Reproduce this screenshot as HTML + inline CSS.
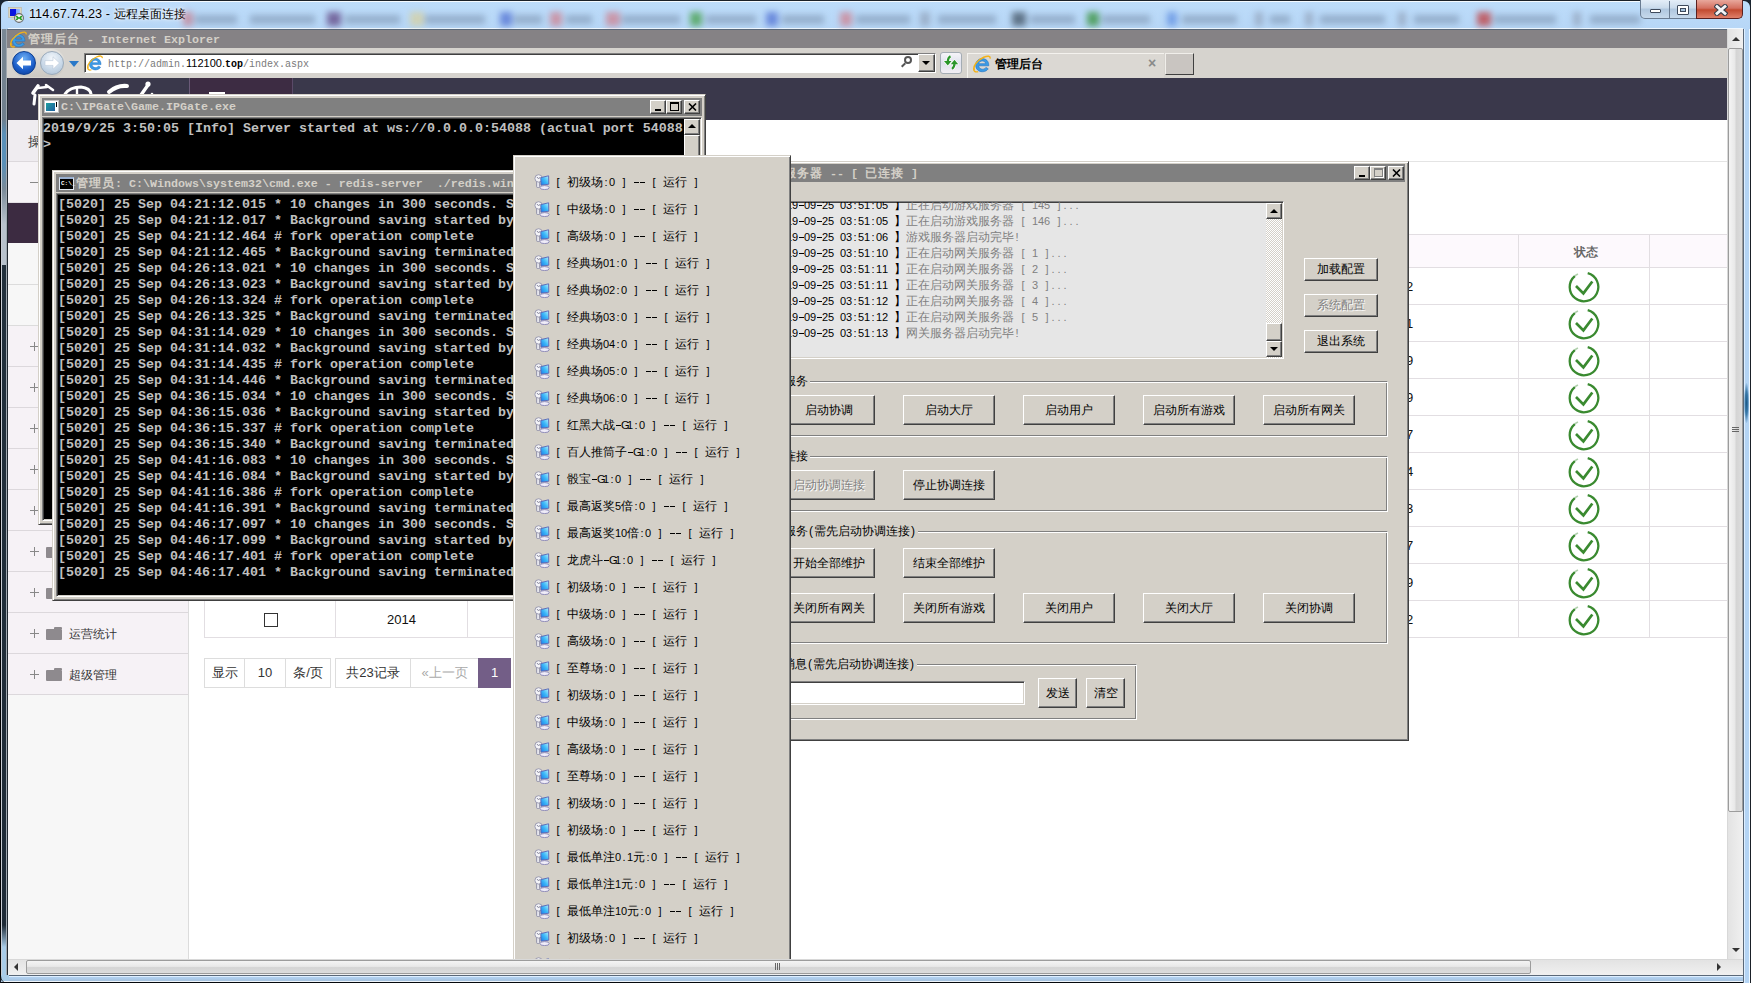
<!DOCTYPE html><html><head><meta charset="utf-8"><style>
.ss2{font-family:"Liberation Sans",sans-serif;font-size:11px;white-space:pre;line-height:16px}
.ss2 b.c{font-size:12px;font-weight:normal}
i.h{display:inline-block;width:6px;text-align:center;font-style:normal;position:relative}
i.d:after{content:"";position:absolute;left:0.5px;top:8px;width:5px;height:1px;background:currentColor}

*{box-sizing:border-box;margin:0;padding:0}
html,body{width:1751px;height:983px;overflow:hidden;background:#1a2633}
body{position:relative;font-family:"Liberation Sans",sans-serif;font-size:12px;color:#000}
.a{position:absolute}
b.c{font-weight:normal}
.ss{font-family:"Liberation Mono",monospace;font-size:10px;white-space:pre;line-height:16px}
.ss b.c{font-size:12px;font-weight:normal}
.con{font-family:"Liberation Mono",monospace;font-weight:bold;font-size:13.34px;color:#c0c0c0;white-space:pre;line-height:16px}
.win{position:absolute;background:#d4d0c8;border:1px solid;border-color:#d4d0c8 #404040 #404040 #d4d0c8;box-shadow:inset 1px 1px 0 #fff,inset -1px -1px 0 #808080}
.cap{position:absolute;background:#808080;color:#d4d0c8}
.tb{position:absolute;width:16px;height:14px;background:#d4d0c8;border:1px solid;border-color:#fff #404040 #404040 #fff;box-shadow:inset -1px -1px 0 #808080}
.btn{position:absolute;background:#d4d0c8;border:1px solid;border-color:#fff #404040 #404040 #fff;box-shadow:inset -1px -1px 0 #808080;text-align:center;font-size:12px;color:#000}
.grp{position:absolute;border:1px solid;border-color:#808080 #fff #fff #808080;box-shadow:inset 1px 1px 0 #fff,inset -1px -1px 0 #808080}
.glbl{position:absolute;background:#d4d0c8;padding:0 2px 0 0;font-size:12px;line-height:14px}
</style></head><body><div class="a" style="left:0;top:0;width:1751px;height:983px;border-radius:7px 7px 0 0;background:linear-gradient(#bddcfa,#b6d6f6 30px,#aecbe8);border:1px solid #1a2028;border-bottom:1px solid #05080c"></div><div class="a" style="left:0;top:29px;width:8px;height:946px;background:linear-gradient(90deg,#000 0 1px,#c8ccd4 1px 2px,transparent 2px 6px,#a0a8b0 6px 7px,#202830 7px 8px),linear-gradient(#7a8894 0,#6e7e8c 90px,#5a90b8 105px,#5a90b8 135px,#7a8a98 160px,#b8c2cc 195px,#b8c2cc 236px,#22303c 236px,#1e2a36 896px,#a8cce8 918px)"></div><div class="a" style="left:8px;top:975px;width:1735px;height:8px;background:linear-gradient(#5a6878 0 1px,#ddeeff 1px 2px,#b2d2f2 2px,#a6c2de 6px,#eef4fa 6px 7px,#05080c 7px 8px)"></div><div class="a" style="left:0;top:975px;width:9px;height:8px;background:linear-gradient(#a8cce8 0 6px,#eef4fa 6px 7px,#05080c 7px 8px);border-left:1px solid #000;border-bottom-left-radius:7px"></div><div class="a" style="left:1743px;top:29px;width:8px;height:954px;background:linear-gradient(90deg,#5a6878 0 1px,#ddeeff 1px 2px,#b4d4f4 2px 6px,#eef8ff 6px 7px,#1a2028 7px 8px)"></div><div class="a" style="left:1744px;top:383px;width:5px;height:40px;background:radial-gradient(ellipse at center,#1e5a88 0,#3a7aaa 40%,rgba(180,212,244,0) 75%)"></div><svg class="a" style="left:4px;top:2px" width="24" height="24" viewBox="0 0 24 24"><defs><linearGradient id="scr" x1="0" y1="0" x2="1" y2="0"><stop offset="0" stop-color="#0a18d8"/><stop offset=".55" stop-color="#0a10e8"/><stop offset=".6" stop-color="#7aa0ff"/><stop offset="1" stop-color="#9cc0ff"/></linearGradient></defs><rect x="4.5" y="5.5" width="13" height="10" fill="#dcd6c0" stroke="#bcb6a0" stroke-width=".6"/><rect x="6" y="7" width="10" height="7" fill="url(#scr)"/><rect x="7" y="16.5" width="4" height="1.5" fill="#d8d4c4"/><circle cx="15" cy="16" r="4.4" fill="#f4f4f4" stroke="#6a6a6a" stroke-width="1.1"/><path d="M12.2 14.2 L14.2 16 L12.2 17.8 M17.8 14.2 L15.8 16 L17.8 17.8" fill="none" stroke="#1a9a1a" stroke-width="1.6"/></svg><div class="a" style="left:29px;top:6px;font-size:12.7px;line-height:17px;color:#000;white-space:nowrap;text-shadow:0 0 6px #fff,0 0 3px #fff">114.67.74.23 - <span style="font-size:12px;margin-left:1px">远程桌面连接</span></div><div class="a" style="left:8px;top:1px;width:1632px;height:1px;background:#f4faff"></div><div class="a" style="left:8px;top:28px;width:1735px;height:1px;background:#f0f8ff"></div><div class="a" style="left:0;top:0;width:1751px;height:28px;overflow:hidden;filter:blur(3px)"><div class="a" style="left:183px;top:12px;width:10px;height:14px;background:#c77a8a;opacity:.7"></div><div class="a" style="left:195px;top:15px;width:42px;height:9px;background:#6a7f98;opacity:.45"></div><div class="a" style="left:250px;top:15px;width:65px;height:9px;background:#6a7f98;opacity:.45"></div><div class="a" style="left:327px;top:12px;width:14px;height:14px;background:#5a3a7a;opacity:.7"></div><div class="a" style="left:345px;top:15px;width:55px;height:9px;background:#6a7f98;opacity:.45"></div><div class="a" style="left:410px;top:12px;width:14px;height:14px;background:#d8d09a;opacity:.7"></div><div class="a" style="left:425px;top:15px;width:60px;height:9px;background:#6a7f98;opacity:.45"></div><div class="a" style="left:500px;top:12px;width:12px;height:14px;background:#4a6ad0;opacity:.7"></div><div class="a" style="left:514px;top:15px;width:28px;height:9px;background:#6a7f98;opacity:.45"></div><div class="a" style="left:550px;top:12px;width:12px;height:14px;background:#d07a88;opacity:.7"></div><div class="a" style="left:566px;top:15px;width:26px;height:9px;background:#6a7f98;opacity:.45"></div><div class="a" style="left:606px;top:12px;width:14px;height:14px;background:#d07a88;opacity:.7"></div><div class="a" style="left:622px;top:15px;width:58px;height:9px;background:#6a7f98;opacity:.45"></div><div class="a" style="left:690px;top:12px;width:12px;height:14px;background:#3a9a3a;opacity:.7"></div><div class="a" style="left:706px;top:15px;width:50px;height:9px;background:#6a7f98;opacity:.45"></div><div class="a" style="left:766px;top:12px;width:12px;height:14px;background:#4a6ad0;opacity:.7"></div><div class="a" style="left:782px;top:15px;width:42px;height:9px;background:#6a7f98;opacity:.45"></div><div class="a" style="left:840px;top:12px;width:12px;height:14px;background:#d07a88;opacity:.7"></div><div class="a" style="left:856px;top:15px;width:54px;height:9px;background:#6a7f98;opacity:.45"></div><div class="a" style="left:920px;top:12px;width:10px;height:14px;background:#90a0b8;opacity:.7"></div><div class="a" style="left:938px;top:15px;width:58px;height:9px;background:#6a7f98;opacity:.45"></div><div class="a" style="left:1012px;top:12px;width:14px;height:14px;background:#3a4a5a;opacity:.7"></div><div class="a" style="left:1030px;top:15px;width:45px;height:9px;background:#6a7f98;opacity:.45"></div><div class="a" style="left:1087px;top:12px;width:12px;height:14px;background:#2a8a2a;opacity:.7"></div><div class="a" style="left:1102px;top:15px;width:48px;height:9px;background:#6a7f98;opacity:.45"></div><div class="a" style="left:1167px;top:12px;width:10px;height:14px;background:#5a8ae0;opacity:.7"></div><div class="a" style="left:1182px;top:15px;width:55px;height:9px;background:#6a7f98;opacity:.45"></div><div class="a" style="left:1255px;top:12px;width:8px;height:14px;background:#90a0b8;opacity:.7"></div><div class="a" style="left:1270px;top:15px;width:20px;height:9px;background:#6a7f98;opacity:.45"></div><div class="a" style="left:1305px;top:12px;width:8px;height:14px;background:#90a0b8;opacity:.7"></div><div class="a" style="left:1320px;top:15px;width:65px;height:9px;background:#6a7f98;opacity:.45"></div><div class="a" style="left:1398px;top:12px;width:8px;height:14px;background:#90a0b8;opacity:.7"></div><div class="a" style="left:1414px;top:15px;width:45px;height:9px;background:#6a7f98;opacity:.45"></div><div class="a" style="left:1477px;top:12px;width:14px;height:14px;background:#c03030;opacity:.7"></div><div class="a" style="left:1494px;top:15px;width:62px;height:9px;background:#6a7f98;opacity:.45"></div><div class="a" style="left:1573px;top:12px;width:8px;height:14px;background:#90a0b8;opacity:.7"></div><div class="a" style="left:1590px;top:15px;width:50px;height:9px;background:#6a7f98;opacity:.45"></div></div><div class="a" style="left:1640px;top:0;width:57px;height:19px;border:1px solid #6a7c92;border-top:none;border-radius:0 0 0 5px;background:linear-gradient(#e4eef8,#c9daeb 45%,#afc6de 50%,#c6d9ec)"></div><div class="a" style="left:1669px;top:1px;width:1px;height:17px;background:#6a7c92"></div><div class="a" style="left:1650px;top:9px;width:11px;height:4px;background:#fff;border:1px solid #3e4a5c;border-radius:1px"></div><div class="a" style="left:1677px;top:5px;width:12px;height:10px;background:#fff;border:1px solid #3e4a5c;border-radius:1px"><div class="a" style="left:2px;top:2px;width:6px;height:4px;background:#a9c4de;border:1px solid #3e4a5c"></div></div><div class="a" style="left:1696px;top:0;width:47px;height:19px;border:1px solid #5a2020;border-top:none;border-radius:0 0 5px 0;background:linear-gradient(#e8a89c,#d47060 45%,#c24a30 55%,#e0806a)"></div><svg class="a" style="left:1714px;top:4px" width="14" height="12" viewBox="0 0 14 12"><path d="M3 2.5 L11 9.5 M11 2.5 L3 9.5" stroke="#3a3f4a" stroke-width="5" stroke-linecap="square"/><path d="M3 2.5 L11 9.5 M11 2.5 L3 9.5" stroke="#f4f4f6" stroke-width="2.8" stroke-linecap="square"/></svg><div class="a" style="left:7px;top:29px;width:1720px;height:19px;background:#858285;border-top:1px solid #5a6878"></div><svg class="a" style="left:10px;top:31px" width="17" height="17" viewBox="0 0 16 16"><path d="M14 9.6 H5 C5.3 11.5 6.6 12.6 8.4 12.6 C9.7 12.6 10.8 12 11.5 11 L13.6 12.3 C12.4 14 10.6 14.9 8.3 14.9 C4.8 14.9 2.4 12.5 2.4 9.1 C2.4 5.7 4.9 3.2 8.2 3.2 C11.6 3.2 14 5.5 14 9 Z M5.1 7.7 H11.3 C11 6.2 9.8 5.3 8.2 5.3 C6.6 5.3 5.4 6.2 5.1 7.7 Z" fill="#3b9be6" stroke="#1f6fc0" stroke-width=".5"/><path d="M1.2 13.5 C-0.5 10 4 4.5 9.5 2 C13 0.5 15.6 0.6 15.2 3.2" fill="none" stroke="#f2b21a" stroke-width="1.3"/><path d="M0.8 11.5 C0.2 14.5 2 15.6 4.5 14.8" fill="none" stroke="#f2b21a" stroke-width="1.2"/></svg><div class="a" style="left:28px;top:31px;font-size:12px;line-height:16px;color:#d4d0c8;white-space:pre"><b class="c" style="font-weight:bold;letter-spacing:1px">管理后台</b><span style="font-family:'Liberation Mono',monospace;font-weight:bold;font-size:11.67px"> - Internet Explorer</span></div><div class="a" style="left:7px;top:48px;width:1720px;height:30px;background:#d6d3ce"></div><div class="a" style="left:11px;top:49px;width:54px;height:28px;border-radius:14px;background:linear-gradient(#e8e6e2,#c9c6c0);opacity:.8"></div><div class="a" style="left:12px;top:51px;width:24px;height:24px;border-radius:50%;background:radial-gradient(circle at 50% 30%,#6fb0f5,#1a5cc8 60%,#0c3a90);border:1px solid #0f3f8f"></div><svg class="a" style="left:12px;top:51px" width="24" height="24" viewBox="0 0 24 24"><path d="M4.5 12 L11 5.8 V9.6 H19 V14.4 H11 V18.2 Z" fill="#fff"/></svg><div class="a" style="left:40px;top:51px;width:24px;height:24px;border-radius:50%;background:radial-gradient(circle at 50% 30%,#f4f8fc,#c6d6e6 60%,#a9bdd2);border:1px solid #9aaabb"></div><svg class="a" style="left:40px;top:51px" width="24" height="24" viewBox="0 0 24 24"><path d="M19.5 12 L13 5.8 V9.6 H5 V14.4 H13 V18.2 Z" fill="#fff" stroke="#b8c8d8" stroke-width=".6"/></svg><div class="a" style="left:69px;top:61px;width:0;height:0;border-left:5px solid transparent;border-right:5px solid transparent;border-top:6px solid #2a78c8"></div><div class="a" style="left:84px;top:53px;width:852px;height:20px;background:#fff;border:1px solid;border-color:#808080 #fff #fff #808080;box-shadow:inset 1px 1px 0 #404040"></div><svg class="a" style="left:87px;top:55px" width="16" height="16" viewBox="0 0 16 16"><path d="M14 9.6 H5 C5.3 11.5 6.6 12.6 8.4 12.6 C9.7 12.6 10.8 12 11.5 11 L13.6 12.3 C12.4 14 10.6 14.9 8.3 14.9 C4.8 14.9 2.4 12.5 2.4 9.1 C2.4 5.7 4.9 3.2 8.2 3.2 C11.6 3.2 14 5.5 14 9 Z M5.1 7.7 H11.3 C11 6.2 9.8 5.3 8.2 5.3 C6.6 5.3 5.4 6.2 5.1 7.7 Z" fill="#3b9be6" stroke="#1f6fc0" stroke-width=".5"/><path d="M1.2 13.5 C-0.5 10 4 4.5 9.5 2 C13 0.5 15.6 0.6 15.2 3.2" fill="none" stroke="#f2b21a" stroke-width="1.3"/><path d="M0.8 11.5 C0.2 14.5 2 15.6 4.5 14.8" fill="none" stroke="#f2b21a" stroke-width="1.2"/></svg><div class="a" style="left:108px;top:55px;font-family:'Liberation Mono',monospace;font-size:10px;line-height:16px;white-space:pre;color:#7a7a7a">http://admin.<span style="color:#000;font-family:'Liberation Sans',sans-serif;font-size:11px">112100.</span><span style="color:#000;font-weight:bold">top</span>/index.aspx</div><div class="a" style="left:904px;top:56px;width:8px;height:8px;border:2px solid #555;border-radius:50%"></div><div class="a" style="left:901px;top:64px;width:5px;height:2px;background:#555;transform:rotate(-45deg)"></div><div class="btn" style="left:918px;top:54px;width:17px;height:18px"></div><div class="a" style="left:922px;top:61px;border-left:4px solid transparent;border-right:4px solid transparent;border-top:4px solid #000"></div><div class="a" style="left:940px;top:52px;width:22px;height:22px;border:1px solid #a4acb4;border-radius:3px;background:linear-gradient(#f6f4f8,#dfe2ee 50%,#f2eef4)"></div><svg class="a" style="left:942px;top:55px" width="18" height="17" viewBox="0 0 18 17"><g stroke="#fff" stroke-width="1.2" stroke-linejoin="round"><path d="M8.5 1.2 Q6 2.5 5.8 6.5" stroke-width="3.6" fill="none"/><path d="M2 6 L9.5 6 L5.8 10.5 Z" fill="#fff"/><path d="M12.5 8.5 Q12.5 12 10 13.8" stroke-width="3.6" fill="none"/><path d="M8.8 9.2 L16.2 9.2 L12.5 4.8 Z" fill="#fff"/></g><path d="M8.5 1.2 Q6 2.5 5.8 6.5" stroke="#2a962a" stroke-width="2.2" fill="none"/><path d="M2 6 L9.5 6 L5.8 10.5 Z" fill="#2a962a"/><path d="M12.5 8.5 Q12.5 12 10 13.8" stroke="#2a962a" stroke-width="2.2" fill="none"/><path d="M8.8 9.2 L16.2 9.2 L12.5 4.8 Z" fill="#2a962a"/></svg><div class="a" style="left:967px;top:53px;width:197px;height:25px;background:#dbd8d3;border-left:1px solid #f4f2ee;border-top:1px solid #f4f2ee"></div><svg class="a" style="left:973px;top:55px" width="18" height="18" viewBox="0 0 16 16"><path d="M14 9.6 H5 C5.3 11.5 6.6 12.6 8.4 12.6 C9.7 12.6 10.8 12 11.5 11 L13.6 12.3 C12.4 14 10.6 14.9 8.3 14.9 C4.8 14.9 2.4 12.5 2.4 9.1 C2.4 5.7 4.9 3.2 8.2 3.2 C11.6 3.2 14 5.5 14 9 Z M5.1 7.7 H11.3 C11 6.2 9.8 5.3 8.2 5.3 C6.6 5.3 5.4 6.2 5.1 7.7 Z" fill="#3b9be6" stroke="#1f6fc0" stroke-width=".5"/><path d="M1.2 13.5 C-0.5 10 4 4.5 9.5 2 C13 0.5 15.6 0.6 15.2 3.2" fill="none" stroke="#f2b21a" stroke-width="1.3"/><path d="M0.8 11.5 C0.2 14.5 2 15.6 4.5 14.8" fill="none" stroke="#f2b21a" stroke-width="1.2"/></svg><div class="a" style="left:995px;top:56px;font-size:12px;font-weight:bold;line-height:16px;color:#000;letter-spacing:0">管理后台</div><div class="a" style="left:1148px;top:54px;font:bold 14px/18px 'Liberation Sans',sans-serif;color:#8a8a8a">&#xd7;</div><div class="a" style="left:1165px;top:53px;width:29px;height:22px;background:#c9c5c1;border:1px solid;border-color:#f0eeea #404040 #404040 #f0eeea"></div><div class="a" style="left:8px;top:78px;width:1719px;height:881px;background:#fff;overflow:hidden"><div class="a" style="left:0;top:0;width:1719px;height:42px;background:#3a384b"></div><div class="a" style="left:181px;top:0;width:104px;height:42px;background:#3d2c43;border-left:1px solid #6a5a78;border-right:1px solid #5a4a68"></div><div class="a" style="left:201px;top:14px;width:16px;height:3px;background:#fff"></div><svg class="a" style="left:7px;top:0" width="170" height="30" viewBox="0 0 170 30"><g fill="none" stroke="#fff" stroke-linecap="round" stroke-linejoin="round"><path d="M18 15 L23 8" stroke-width="3.6"/><path d="M23 10 L32 9" stroke-width="2.6"/><path d="M31 7 L38 12" stroke-width="2.6"/><path d="M20 17 L19 26" stroke-width="3"/><path d="M50 16 Q55 9 66 9 Q75 10 76 16" stroke-width="3"/><path d="M62 10 L62 16" stroke-width="2.4"/><path d="M94 14 Q102 7 112 8" stroke-width="4"/><path d="M126 17 L133 7" stroke-width="3.4"/></g><circle cx="133" cy="6" r="2.6" fill="#fff"/><circle cx="137" cy="16" r="1.3" fill="#fff"/></svg><div class="a" style="left:20px;top:26px;width:10px;height:16px;overflow:hidden"></div><div class="a" style="left:0;top:42px;width:181px;height:839px;background:#f7f7f7;border-right:1px solid #dcdcdc"></div><div class="a" style="left:0;top:42px;width:180px;height:42px;background:#efecf0;border-bottom:1px solid #dcd8dc"></div><div class="a" style="left:20px;top:57px;font-size:13px;line-height:14px;color:#333">操作面板</div><div class="a" style="left:0;top:84px;width:180px;height:41px;background:#f6f3f6;border-bottom:1px solid #e4e0e4"></div><div class="a" style="left:22px;top:104px;width:8px;height:1px;background:#888"></div><div class="a" style="left:0;top:125px;width:180px;height:40px;background:#3c2b41"></div><div class="a" style="left:0;top:165px;width:180px;height:42px;border-bottom:1px solid #dcdcdc"></div><div class="a" style="left:0;top:207px;width:180px;height:41px;border-bottom:1px solid #dcdcdc"></div><div class="a" style="left:0;top:248px;width:180px;height:41px;background:#f6f2f6;border-bottom:1px solid #dcd8dc"></div><div class="a" style="left:22px;top:268px;width:9px;height:1px;background:#888"></div><div class="a" style="left:26px;top:264px;width:1px;height:9px;background:#888"></div><div class="a" style="left:38px;top:264px;width:16px;height:11px;background:#8e8a8e;border-radius:1px"></div><div class="a" style="left:46px;top:262px;width:8px;height:2px;background:#8e8a8e;border-radius:1px 1px 0 0"></div><div class="a" style="left:0;top:289px;width:180px;height:41px;background:#f6f2f6;border-bottom:1px solid #dcd8dc"></div><div class="a" style="left:22px;top:309px;width:9px;height:1px;background:#888"></div><div class="a" style="left:26px;top:305px;width:1px;height:9px;background:#888"></div><div class="a" style="left:38px;top:305px;width:16px;height:11px;background:#8e8a8e;border-radius:1px"></div><div class="a" style="left:46px;top:303px;width:8px;height:2px;background:#8e8a8e;border-radius:1px 1px 0 0"></div><div class="a" style="left:0;top:330px;width:180px;height:41px;background:#f6f2f6;border-bottom:1px solid #dcd8dc"></div><div class="a" style="left:22px;top:350px;width:9px;height:1px;background:#888"></div><div class="a" style="left:26px;top:346px;width:1px;height:9px;background:#888"></div><div class="a" style="left:38px;top:346px;width:16px;height:11px;background:#8e8a8e;border-radius:1px"></div><div class="a" style="left:46px;top:344px;width:8px;height:2px;background:#8e8a8e;border-radius:1px 1px 0 0"></div><div class="a" style="left:0;top:371px;width:180px;height:41px;background:#f6f2f6;border-bottom:1px solid #dcd8dc"></div><div class="a" style="left:22px;top:391px;width:9px;height:1px;background:#888"></div><div class="a" style="left:26px;top:387px;width:1px;height:9px;background:#888"></div><div class="a" style="left:38px;top:387px;width:16px;height:11px;background:#8e8a8e;border-radius:1px"></div><div class="a" style="left:46px;top:385px;width:8px;height:2px;background:#8e8a8e;border-radius:1px 1px 0 0"></div><div class="a" style="left:0;top:412px;width:180px;height:41px;background:#f6f2f6;border-bottom:1px solid #dcd8dc"></div><div class="a" style="left:22px;top:432px;width:9px;height:1px;background:#888"></div><div class="a" style="left:26px;top:428px;width:1px;height:9px;background:#888"></div><div class="a" style="left:38px;top:428px;width:16px;height:11px;background:#8e8a8e;border-radius:1px"></div><div class="a" style="left:46px;top:426px;width:8px;height:2px;background:#8e8a8e;border-radius:1px 1px 0 0"></div><div class="a" style="left:0;top:453px;width:180px;height:41px;background:#f6f2f6;border-bottom:1px solid #dcd8dc"></div><div class="a" style="left:22px;top:473px;width:9px;height:1px;background:#888"></div><div class="a" style="left:26px;top:469px;width:1px;height:9px;background:#888"></div><div class="a" style="left:38px;top:469px;width:16px;height:11px;background:#8e8a8e;border-radius:1px"></div><div class="a" style="left:46px;top:467px;width:8px;height:2px;background:#8e8a8e;border-radius:1px 1px 0 0"></div><div class="a" style="left:0;top:494px;width:180px;height:41px;background:#f6f2f6;border-bottom:1px solid #dcd8dc"></div><div class="a" style="left:22px;top:514px;width:9px;height:1px;background:#888"></div><div class="a" style="left:26px;top:510px;width:1px;height:9px;background:#888"></div><div class="a" style="left:38px;top:510px;width:16px;height:11px;background:#8e8a8e;border-radius:1px"></div><div class="a" style="left:46px;top:508px;width:8px;height:2px;background:#8e8a8e;border-radius:1px 1px 0 0"></div><div class="a" style="left:0;top:535px;width:180px;height:41px;background:#f6f2f6;border-bottom:1px solid #dcd8dc"></div><div class="a" style="left:22px;top:555px;width:9px;height:1px;background:#888"></div><div class="a" style="left:26px;top:551px;width:1px;height:9px;background:#888"></div><div class="a" style="left:38px;top:551px;width:16px;height:11px;background:#8e8a8e;border-radius:1px"></div><div class="a" style="left:46px;top:549px;width:8px;height:2px;background:#8e8a8e;border-radius:1px 1px 0 0"></div><div class="a" style="left:61px;top:549px;font-size:12px;line-height:14px;color:#333">运营统计</div><div class="a" style="left:0;top:576px;width:180px;height:41px;background:#f6f2f6;border-bottom:1px solid #dcd8dc"></div><div class="a" style="left:22px;top:596px;width:9px;height:1px;background:#888"></div><div class="a" style="left:26px;top:592px;width:1px;height:9px;background:#888"></div><div class="a" style="left:38px;top:592px;width:16px;height:11px;background:#8e8a8e;border-radius:1px"></div><div class="a" style="left:46px;top:590px;width:8px;height:2px;background:#8e8a8e;border-radius:1px 1px 0 0"></div><div class="a" style="left:61px;top:590px;font-size:12px;line-height:14px;color:#333">超级管理</div><div class="a" style="left:181px;top:83px;width:1538px;height:1px;background:#e4e4e4"></div><div class="a" style="left:196px;top:156px;width:1523px;height:34px;background:#fdf9fd;border-top:1px solid #e2dee2;border-bottom:1px solid #e2dee2;border-left:1px solid #e2dee2"></div><div class="a" style="left:1510px;top:156px;width:1px;height:404px;background:#e2dee2"></div><div class="a" style="left:1641px;top:156px;width:1px;height:404px;background:#e2dee2"></div><div class="a" style="left:1566px;top:167px;font-size:12px;font-weight:bold;line-height:14px;color:#666">状态</div><div class="a" style="left:196px;top:190px;width:1523px;height:37px;border-bottom:1px solid #e2dee2;border-left:1px solid #e2dee2"></div><div class="a" style="left:1398px;top:202px;font-size:13px;line-height:14px;color:#111">2</div><svg class="a" style="left:1560px;top:193px" width="32" height="32" viewBox="0 0 32 32"><path d="M19.7 2.19 A14.3 14.3 0 1 1 6.81 5.05" fill="none" stroke="#3a8a30" stroke-width="2.3"/><path d="M6.81 5.05 A14.3 14.3 0 0 1 9.96 3.04" fill="none" stroke="#3a8a30" stroke-width="1.8" opacity=".4"/><path d="M8 15 L15.4 22.4 L24.3 10.5" fill="none" stroke="#3a8a30" stroke-width="2.7" stroke-linejoin="miter"/></svg><div class="a" style="left:196px;top:227px;width:1523px;height:37px;border-bottom:1px solid #e2dee2;border-left:1px solid #e2dee2"></div><div class="a" style="left:1398px;top:239px;font-size:13px;line-height:14px;color:#111">1</div><svg class="a" style="left:1560px;top:230px" width="32" height="32" viewBox="0 0 32 32"><path d="M19.7 2.19 A14.3 14.3 0 1 1 6.81 5.05" fill="none" stroke="#3a8a30" stroke-width="2.3"/><path d="M6.81 5.05 A14.3 14.3 0 0 1 9.96 3.04" fill="none" stroke="#3a8a30" stroke-width="1.8" opacity=".4"/><path d="M8 15 L15.4 22.4 L24.3 10.5" fill="none" stroke="#3a8a30" stroke-width="2.7" stroke-linejoin="miter"/></svg><div class="a" style="left:196px;top:264px;width:1523px;height:37px;border-bottom:1px solid #e2dee2;border-left:1px solid #e2dee2"></div><div class="a" style="left:1398px;top:276px;font-size:13px;line-height:14px;color:#111">9</div><svg class="a" style="left:1560px;top:267px" width="32" height="32" viewBox="0 0 32 32"><path d="M19.7 2.19 A14.3 14.3 0 1 1 6.81 5.05" fill="none" stroke="#3a8a30" stroke-width="2.3"/><path d="M6.81 5.05 A14.3 14.3 0 0 1 9.96 3.04" fill="none" stroke="#3a8a30" stroke-width="1.8" opacity=".4"/><path d="M8 15 L15.4 22.4 L24.3 10.5" fill="none" stroke="#3a8a30" stroke-width="2.7" stroke-linejoin="miter"/></svg><div class="a" style="left:196px;top:301px;width:1523px;height:37px;border-bottom:1px solid #e2dee2;border-left:1px solid #e2dee2"></div><div class="a" style="left:1398px;top:313px;font-size:13px;line-height:14px;color:#111">9</div><svg class="a" style="left:1560px;top:304px" width="32" height="32" viewBox="0 0 32 32"><path d="M19.7 2.19 A14.3 14.3 0 1 1 6.81 5.05" fill="none" stroke="#3a8a30" stroke-width="2.3"/><path d="M6.81 5.05 A14.3 14.3 0 0 1 9.96 3.04" fill="none" stroke="#3a8a30" stroke-width="1.8" opacity=".4"/><path d="M8 15 L15.4 22.4 L24.3 10.5" fill="none" stroke="#3a8a30" stroke-width="2.7" stroke-linejoin="miter"/></svg><div class="a" style="left:196px;top:338px;width:1523px;height:37px;border-bottom:1px solid #e2dee2;border-left:1px solid #e2dee2"></div><div class="a" style="left:1398px;top:350px;font-size:13px;line-height:14px;color:#111">7</div><svg class="a" style="left:1560px;top:341px" width="32" height="32" viewBox="0 0 32 32"><path d="M19.7 2.19 A14.3 14.3 0 1 1 6.81 5.05" fill="none" stroke="#3a8a30" stroke-width="2.3"/><path d="M6.81 5.05 A14.3 14.3 0 0 1 9.96 3.04" fill="none" stroke="#3a8a30" stroke-width="1.8" opacity=".4"/><path d="M8 15 L15.4 22.4 L24.3 10.5" fill="none" stroke="#3a8a30" stroke-width="2.7" stroke-linejoin="miter"/></svg><div class="a" style="left:196px;top:375px;width:1523px;height:37px;border-bottom:1px solid #e2dee2;border-left:1px solid #e2dee2"></div><div class="a" style="left:1398px;top:387px;font-size:13px;line-height:14px;color:#111">4</div><svg class="a" style="left:1560px;top:378px" width="32" height="32" viewBox="0 0 32 32"><path d="M19.7 2.19 A14.3 14.3 0 1 1 6.81 5.05" fill="none" stroke="#3a8a30" stroke-width="2.3"/><path d="M6.81 5.05 A14.3 14.3 0 0 1 9.96 3.04" fill="none" stroke="#3a8a30" stroke-width="1.8" opacity=".4"/><path d="M8 15 L15.4 22.4 L24.3 10.5" fill="none" stroke="#3a8a30" stroke-width="2.7" stroke-linejoin="miter"/></svg><div class="a" style="left:196px;top:412px;width:1523px;height:37px;border-bottom:1px solid #e2dee2;border-left:1px solid #e2dee2"></div><div class="a" style="left:1398px;top:424px;font-size:13px;line-height:14px;color:#111">3</div><svg class="a" style="left:1560px;top:415px" width="32" height="32" viewBox="0 0 32 32"><path d="M19.7 2.19 A14.3 14.3 0 1 1 6.81 5.05" fill="none" stroke="#3a8a30" stroke-width="2.3"/><path d="M6.81 5.05 A14.3 14.3 0 0 1 9.96 3.04" fill="none" stroke="#3a8a30" stroke-width="1.8" opacity=".4"/><path d="M8 15 L15.4 22.4 L24.3 10.5" fill="none" stroke="#3a8a30" stroke-width="2.7" stroke-linejoin="miter"/></svg><div class="a" style="left:196px;top:449px;width:1523px;height:37px;border-bottom:1px solid #e2dee2;border-left:1px solid #e2dee2"></div><div class="a" style="left:1398px;top:461px;font-size:13px;line-height:14px;color:#111">7</div><svg class="a" style="left:1560px;top:452px" width="32" height="32" viewBox="0 0 32 32"><path d="M19.7 2.19 A14.3 14.3 0 1 1 6.81 5.05" fill="none" stroke="#3a8a30" stroke-width="2.3"/><path d="M6.81 5.05 A14.3 14.3 0 0 1 9.96 3.04" fill="none" stroke="#3a8a30" stroke-width="1.8" opacity=".4"/><path d="M8 15 L15.4 22.4 L24.3 10.5" fill="none" stroke="#3a8a30" stroke-width="2.7" stroke-linejoin="miter"/></svg><div class="a" style="left:196px;top:486px;width:1523px;height:37px;border-bottom:1px solid #e2dee2;border-left:1px solid #e2dee2"></div><div class="a" style="left:1398px;top:498px;font-size:13px;line-height:14px;color:#111">9</div><svg class="a" style="left:1560px;top:489px" width="32" height="32" viewBox="0 0 32 32"><path d="M19.7 2.19 A14.3 14.3 0 1 1 6.81 5.05" fill="none" stroke="#3a8a30" stroke-width="2.3"/><path d="M6.81 5.05 A14.3 14.3 0 0 1 9.96 3.04" fill="none" stroke="#3a8a30" stroke-width="1.8" opacity=".4"/><path d="M8 15 L15.4 22.4 L24.3 10.5" fill="none" stroke="#3a8a30" stroke-width="2.7" stroke-linejoin="miter"/></svg><div class="a" style="left:196px;top:523px;width:1523px;height:37px;border-bottom:1px solid #e2dee2;border-left:1px solid #e2dee2"></div><div class="a" style="left:1398px;top:535px;font-size:13px;line-height:14px;color:#111">2</div><svg class="a" style="left:1560px;top:526px" width="32" height="32" viewBox="0 0 32 32"><path d="M19.7 2.19 A14.3 14.3 0 1 1 6.81 5.05" fill="none" stroke="#3a8a30" stroke-width="2.3"/><path d="M6.81 5.05 A14.3 14.3 0 0 1 9.96 3.04" fill="none" stroke="#3a8a30" stroke-width="1.8" opacity=".4"/><path d="M8 15 L15.4 22.4 L24.3 10.5" fill="none" stroke="#3a8a30" stroke-width="2.7" stroke-linejoin="miter"/></svg><div class="a" style="left:327px;top:156px;width:1px;height:404px;background:#e2dee2"></div><div class="a" style="left:459px;top:156px;width:1px;height:404px;background:#e2dee2"></div><div class="a" style="left:256px;top:535px;width:14px;height:14px;border:1px solid #333;background:#fff"></div><div class="a" style="left:379px;top:535px;font-size:13px;line-height:14px;color:#111">2014</div><div class="a" style="left:196px;top:580px;width:41px;height:30px;background:#fff;border:1px solid #ddd;text-align:center;font-size:13px;line-height:28px;color:#333">显示</div><div class="a" style="left:236px;top:580px;width:42px;height:30px;background:#fff;border:1px solid #ddd;text-align:center;font-size:13px;line-height:28px;color:#333">10</div><div class="a" style="left:277px;top:580px;width:46px;height:30px;background:#fff;border:1px solid #ddd;text-align:center;font-size:13px;line-height:28px;color:#333">条/页</div><div class="a" style="left:327px;top:580px;width:76px;height:30px;background:#fff;border:1px solid #ddd;text-align:center;font-size:13px;line-height:28px;color:#333">共23记录</div><div class="a" style="left:402px;top:580px;width:69px;height:30px;background:#fff;border:1px solid #ddd;text-align:center;font-size:13px;line-height:28px;color:#aaa">«上一页</div><div class="a" style="left:470px;top:580px;width:33px;height:30px;background:#735e87;border:1px solid #735e87;text-align:center;font-size:13px;line-height:28px;color:#fff">1</div></div><div class="win" style="left:38px;top:94px;width:668px;height:431px"></div><div class="cap" style="left:42px;top:98px;width:660px;height:18px"></div><div class="a" style="left:44px;top:100px;width:15px;height:13px;background:#fff;border:1px solid #c0c0c0"><div class="a" style="left:1px;top:2px;width:9px;height:8px;background:linear-gradient(135deg,#20a0a0,#2060a0)"></div><div class="a" style="left:11px;top:1px;width:1px;height:5px;background:#000"></div></div><div class="a" style="left:61px;top:99px;font-family:'Liberation Mono',monospace;font-weight:bold;font-size:11.67px;line-height:16px;color:#d4d0c8;white-space:pre">C:\IPGate\Game.IPGate.exe</div><div class="tb" style="left:684px;top:100px"><svg class="a" style="left:3px;top:2px" width="9" height="8"><path d="M1 0.5 L8 7.5 M8 0.5 L1 7.5" stroke="#000" stroke-width="1.6"/></svg></div><div class="tb" style="left:666px;top:100px"><div class="a" style="left:3px;top:1px;width:9px;height:9px;border:1px solid #000;border-top-width:2px"></div></div><div class="tb" style="left:650px;top:100px"><div class="a" style="left:4px;top:8px;width:6px;height:2px;background:#000"></div></div><div class="a" style="left:42px;top:117px;width:660px;height:404px;background:#000;border:1px solid;border-color:#808080 #fff #fff #808080;box-shadow:inset 1px 1px 0 #404040,inset -1px -1px 0 #d4d0c8"></div><div class="con a" style="left:43px;top:121px">2019/9/25 3:50:05 [Info] Server started at ws://0.0.0.0:54088 (actual port 54088
&gt;</div><div class="a" style="left:684px;top:119px;width:16px;height:400px;background:repeating-conic-gradient(#fff 0 25%,#d4d0c8 0 50%) 0 0/2px 2px"></div><div class="btn" style="left:684px;top:119px;width:16px;height:16px"><div class="a" style="left:3px;top:4px;border-left:4px solid transparent;border-right:4px solid transparent;border-bottom:4px solid #000"></div></div><div class="btn" style="left:684px;top:135px;width:16px;height:300px"></div><div class="win" style="left:52px;top:170px;width:480px;height:431px"></div><div class="cap" style="left:56px;top:174px;width:472px;height:18px"></div><div class="a" style="left:59px;top:177px;width:15px;height:13px;background:#000;border:1px solid #dfe6ef;border-top:2px solid #9ab0d0"><div class="a" style="left:1px;top:1px;font:bold 6px/8px 'Liberation Mono',monospace;color:#fff;white-space:pre">C:\_</div></div><div class="a" style="left:76px;top:175px;font-size:12px;line-height:16px;color:#d4d0c8;white-space:pre"><b class="c" style="font-weight:bold;font-size:12px;letter-spacing:1px">管理员</b><span style="font-family:'Liberation Mono',monospace;font-weight:bold;font-size:11.67px">: C:\Windows\system32\cmd.exe - redis-server  ./redis.windows.conf</span></div><div class="a" style="left:56px;top:193px;width:480px;height:404px;background:#000;border:1px solid;border-color:#808080 #fff #fff #808080;box-shadow:inset 1px 1px 0 #404040,inset -1px -1px 0 #d4d0c8"></div><div class="con a" style="left:58px;top:197px;width:455px;overflow:hidden">[5020] 25 Sep 04:21:12.015 * 10 changes in 300 seconds. Saving...
[5020] 25 Sep 04:21:12.017 * Background saving started by pid 1234
[5020] 25 Sep 04:21:12.464 # fork operation complete
[5020] 25 Sep 04:21:12.465 * Background saving terminated with success
[5020] 25 Sep 04:26:13.021 * 10 changes in 300 seconds. Saving...
[5020] 25 Sep 04:26:13.023 * Background saving started by pid 1234
[5020] 25 Sep 04:26:13.324 # fork operation complete
[5020] 25 Sep 04:26:13.325 * Background saving terminated with success
[5020] 25 Sep 04:31:14.029 * 10 changes in 300 seconds. Saving...
[5020] 25 Sep 04:31:14.032 * Background saving started by pid 1234
[5020] 25 Sep 04:31:14.435 # fork operation complete
[5020] 25 Sep 04:31:14.446 * Background saving terminated with success
[5020] 25 Sep 04:36:15.034 * 10 changes in 300 seconds. Saving...
[5020] 25 Sep 04:36:15.036 * Background saving started by pid 1234
[5020] 25 Sep 04:36:15.337 # fork operation complete
[5020] 25 Sep 04:36:15.340 * Background saving terminated with success
[5020] 25 Sep 04:41:16.083 * 10 changes in 300 seconds. Saving...
[5020] 25 Sep 04:41:16.084 * Background saving started by pid 1234
[5020] 25 Sep 04:41:16.386 # fork operation complete
[5020] 25 Sep 04:41:16.391 * Background saving terminated with success
[5020] 25 Sep 04:46:17.097 * 10 changes in 300 seconds. Saving...
[5020] 25 Sep 04:46:17.099 * Background saving started by pid 1234
[5020] 25 Sep 04:46:17.401 # fork operation complete
[5020] 25 Sep 04:46:17.401 * Background saving terminated with success</div><div class="win" style="left:560px;top:161px;width:849px;height:580px;border-right-color:#404040"></div><div class="cap" style="left:564px;top:164px;width:841px;height:18px"></div><div class="a" style="left:758px;top:165px;font-size:12px;font-weight:bold;line-height:16px;color:#d4d0c8;white-space:pre"><span style="letter-spacing:1px">游戏服务器</span><span style="font-family:'Liberation Mono',monospace;font-size:11.67px"> -- [ </span><span style="letter-spacing:1px">已连接</span><span style="font-family:'Liberation Mono',monospace;font-size:11.67px"> ]</span></div><div class="tb" style="left:1388px;top:166px"><svg class="a" style="left:3px;top:2px" width="9" height="8"><path d="M1 0.5 L8 7.5 M8 0.5 L1 7.5" stroke="#000" stroke-width="1.6"/></svg></div><div class="tb" style="left:1370px;top:166px"><div class="a" style="left:3px;top:1px;width:9px;height:9px;border:1px solid #808080;border-top-width:2px;box-shadow:1px 1px 0 #fff"></div></div><div class="tb" style="left:1354px;top:166px"><div class="a" style="left:4px;top:8px;width:6px;height:2px;background:#000"></div></div><div class="a" style="left:570px;top:201px;width:714px;height:158px;background:#e6e6e6;border:1px solid;border-color:#808080 #fff #fff #808080;box-shadow:inset 1px 1px 0 #404040,inset -1px -1px 0 #d4d0c8;overflow:hidden"><div class="a ss2" style="left:203px;top:-5px;color:#000"><i class="h">2</i><i class="h">0</i><i class="h">1</i><i class="h">9</i><i class="h d">&nbsp;</i><i class="h">0</i><i class="h">9</i><i class="h d">&nbsp;</i><i class="h">2</i><i class="h">5</i><i class="h">&nbsp;</i><i class="h">0</i><i class="h">3</i><i class="h">:</i><i class="h">5</i><i class="h">1</i><i class="h">:</i><i class="h">0</i><i class="h">5</i><i class="h">&nbsp;</i><b class="c">】</b><span style="color:#808080"><b class="c">正在启动游戏服务器</b><i class="h">&nbsp;</i><i class="h">[</i><i class="h">&nbsp;</i><i class="h">1</i><i class="h">4</i><i class="h">5</i><i class="h">&nbsp;</i><i class="h">]</i><i class="h">.</i><i class="h">.</i><i class="h">.</i></span></div><div class="a ss2" style="left:203px;top:11px;color:#000"><i class="h">2</i><i class="h">0</i><i class="h">1</i><i class="h">9</i><i class="h d">&nbsp;</i><i class="h">0</i><i class="h">9</i><i class="h d">&nbsp;</i><i class="h">2</i><i class="h">5</i><i class="h">&nbsp;</i><i class="h">0</i><i class="h">3</i><i class="h">:</i><i class="h">5</i><i class="h">1</i><i class="h">:</i><i class="h">0</i><i class="h">5</i><i class="h">&nbsp;</i><b class="c">】</b><span style="color:#808080"><b class="c">正在启动游戏服务器</b><i class="h">&nbsp;</i><i class="h">[</i><i class="h">&nbsp;</i><i class="h">1</i><i class="h">4</i><i class="h">6</i><i class="h">&nbsp;</i><i class="h">]</i><i class="h">.</i><i class="h">.</i><i class="h">.</i></span></div><div class="a ss2" style="left:203px;top:27px;color:#000"><i class="h">2</i><i class="h">0</i><i class="h">1</i><i class="h">9</i><i class="h d">&nbsp;</i><i class="h">0</i><i class="h">9</i><i class="h d">&nbsp;</i><i class="h">2</i><i class="h">5</i><i class="h">&nbsp;</i><i class="h">0</i><i class="h">3</i><i class="h">:</i><i class="h">5</i><i class="h">1</i><i class="h">:</i><i class="h">0</i><i class="h">6</i><i class="h">&nbsp;</i><b class="c">】</b><span style="color:#808080"><b class="c">游戏服务器启动完毕</b><i class="h">!</i></span></div><div class="a ss2" style="left:203px;top:43px;color:#000"><i class="h">2</i><i class="h">0</i><i class="h">1</i><i class="h">9</i><i class="h d">&nbsp;</i><i class="h">0</i><i class="h">9</i><i class="h d">&nbsp;</i><i class="h">2</i><i class="h">5</i><i class="h">&nbsp;</i><i class="h">0</i><i class="h">3</i><i class="h">:</i><i class="h">5</i><i class="h">1</i><i class="h">:</i><i class="h">1</i><i class="h">0</i><i class="h">&nbsp;</i><b class="c">】</b><span style="color:#808080"><b class="c">正在启动网关服务器</b><i class="h">&nbsp;</i><i class="h">[</i><i class="h">&nbsp;</i><i class="h">1</i><i class="h">&nbsp;</i><i class="h">]</i><i class="h">.</i><i class="h">.</i><i class="h">.</i></span></div><div class="a ss2" style="left:203px;top:59px;color:#000"><i class="h">2</i><i class="h">0</i><i class="h">1</i><i class="h">9</i><i class="h d">&nbsp;</i><i class="h">0</i><i class="h">9</i><i class="h d">&nbsp;</i><i class="h">2</i><i class="h">5</i><i class="h">&nbsp;</i><i class="h">0</i><i class="h">3</i><i class="h">:</i><i class="h">5</i><i class="h">1</i><i class="h">:</i><i class="h">1</i><i class="h">1</i><i class="h">&nbsp;</i><b class="c">】</b><span style="color:#808080"><b class="c">正在启动网关服务器</b><i class="h">&nbsp;</i><i class="h">[</i><i class="h">&nbsp;</i><i class="h">2</i><i class="h">&nbsp;</i><i class="h">]</i><i class="h">.</i><i class="h">.</i><i class="h">.</i></span></div><div class="a ss2" style="left:203px;top:75px;color:#000"><i class="h">2</i><i class="h">0</i><i class="h">1</i><i class="h">9</i><i class="h d">&nbsp;</i><i class="h">0</i><i class="h">9</i><i class="h d">&nbsp;</i><i class="h">2</i><i class="h">5</i><i class="h">&nbsp;</i><i class="h">0</i><i class="h">3</i><i class="h">:</i><i class="h">5</i><i class="h">1</i><i class="h">:</i><i class="h">1</i><i class="h">1</i><i class="h">&nbsp;</i><b class="c">】</b><span style="color:#808080"><b class="c">正在启动网关服务器</b><i class="h">&nbsp;</i><i class="h">[</i><i class="h">&nbsp;</i><i class="h">3</i><i class="h">&nbsp;</i><i class="h">]</i><i class="h">.</i><i class="h">.</i><i class="h">.</i></span></div><div class="a ss2" style="left:203px;top:91px;color:#000"><i class="h">2</i><i class="h">0</i><i class="h">1</i><i class="h">9</i><i class="h d">&nbsp;</i><i class="h">0</i><i class="h">9</i><i class="h d">&nbsp;</i><i class="h">2</i><i class="h">5</i><i class="h">&nbsp;</i><i class="h">0</i><i class="h">3</i><i class="h">:</i><i class="h">5</i><i class="h">1</i><i class="h">:</i><i class="h">1</i><i class="h">2</i><i class="h">&nbsp;</i><b class="c">】</b><span style="color:#808080"><b class="c">正在启动网关服务器</b><i class="h">&nbsp;</i><i class="h">[</i><i class="h">&nbsp;</i><i class="h">4</i><i class="h">&nbsp;</i><i class="h">]</i><i class="h">.</i><i class="h">.</i><i class="h">.</i></span></div><div class="a ss2" style="left:203px;top:107px;color:#000"><i class="h">2</i><i class="h">0</i><i class="h">1</i><i class="h">9</i><i class="h d">&nbsp;</i><i class="h">0</i><i class="h">9</i><i class="h d">&nbsp;</i><i class="h">2</i><i class="h">5</i><i class="h">&nbsp;</i><i class="h">0</i><i class="h">3</i><i class="h">:</i><i class="h">5</i><i class="h">1</i><i class="h">:</i><i class="h">1</i><i class="h">2</i><i class="h">&nbsp;</i><b class="c">】</b><span style="color:#808080"><b class="c">正在启动网关服务器</b><i class="h">&nbsp;</i><i class="h">[</i><i class="h">&nbsp;</i><i class="h">5</i><i class="h">&nbsp;</i><i class="h">]</i><i class="h">.</i><i class="h">.</i><i class="h">.</i></span></div><div class="a ss2" style="left:203px;top:123px;color:#000"><i class="h">2</i><i class="h">0</i><i class="h">1</i><i class="h">9</i><i class="h d">&nbsp;</i><i class="h">0</i><i class="h">9</i><i class="h d">&nbsp;</i><i class="h">2</i><i class="h">5</i><i class="h">&nbsp;</i><i class="h">0</i><i class="h">3</i><i class="h">:</i><i class="h">5</i><i class="h">1</i><i class="h">:</i><i class="h">1</i><i class="h">3</i><i class="h">&nbsp;</i><b class="c">】</b><span style="color:#808080"><b class="c">网关服务器启动完毕</b><i class="h">!</i></span></div></div><div class="a" style="left:1266px;top:203px;width:16px;height:155px;background:repeating-conic-gradient(#fff 0 25%,#d4d0c8 0 50%) 0 0/2px 2px"></div><div class="btn" style="left:1266px;top:203px;width:16px;height:16px"><div class="a" style="left:3px;top:5px;border-left:4px solid transparent;border-right:4px solid transparent;border-bottom:4px solid #000"></div></div><div class="btn" style="left:1266px;top:323px;width:16px;height:18px"></div><div class="btn" style="left:1266px;top:341px;width:16px;height:16px"><div class="a" style="left:3px;top:5px;border-left:4px solid transparent;border-right:4px solid transparent;border-top:4px solid #000"></div></div><div class="btn" style="left:1304px;top:258px;width:74px;height:23px;line-height:21px;">加载配置</div><div class="btn" style="left:1304px;top:294px;width:74px;height:23px;line-height:21px;color:#808080;text-shadow:1px 1px 0 #fff">系统配置</div><div class="btn" style="left:1304px;top:330px;width:74px;height:23px;line-height:21px;">退出系统</div><div class="grp" style="left:568px;top:381px;width:820px;height:56px"></div><div class="glbl ss2" style="left:784px;top:374px;line-height:14px"><b class="c">服务</b></div><div class="grp" style="left:568px;top:456px;width:820px;height:56px"></div><div class="glbl ss2" style="left:784px;top:449px;line-height:14px"><b class="c">连接</b></div><div class="grp" style="left:568px;top:531px;width:820px;height:113px"></div><div class="glbl ss2" style="left:784px;top:524px;line-height:14px"><b class="c">服务</b><i class="h">(</i><b class="c">需先启动协调连接</b><i class="h">)</i></div><div class="grp" style="left:568px;top:664px;width:569px;height:56px"></div><div class="glbl ss2" style="left:783px;top:657px;line-height:14px"><b class="c">消息</b><i class="h">(</i><b class="c">需先启动协调连接</b><i class="h">)</i></div><div class="btn" style="left:783px;top:395px;width:92px;height:30px;line-height:28px;">启动协调</div><div class="btn" style="left:903px;top:395px;width:92px;height:30px;line-height:28px;">启动大厅</div><div class="btn" style="left:1023px;top:395px;width:92px;height:30px;line-height:28px;">启动用户</div><div class="btn" style="left:1143px;top:395px;width:92px;height:30px;line-height:28px;">启动所有游戏</div><div class="btn" style="left:1263px;top:395px;width:92px;height:30px;line-height:28px;">启动所有网关</div><div class="btn" style="left:783px;top:470px;width:92px;height:30px;line-height:28px;color:#808080;text-shadow:1px 1px 0 #fff">启动协调连接</div><div class="btn" style="left:903px;top:470px;width:92px;height:30px;line-height:28px;">停止协调连接</div><div class="btn" style="left:783px;top:548px;width:92px;height:30px;line-height:28px;">开始全部维护</div><div class="btn" style="left:903px;top:548px;width:92px;height:30px;line-height:28px;">结束全部维护</div><div class="btn" style="left:783px;top:593px;width:92px;height:30px;line-height:28px;">关闭所有网关</div><div class="btn" style="left:903px;top:593px;width:92px;height:30px;line-height:28px;">关闭所有游戏</div><div class="btn" style="left:1023px;top:593px;width:92px;height:30px;line-height:28px;">关闭用户</div><div class="btn" style="left:1143px;top:593px;width:92px;height:30px;line-height:28px;">关闭大厅</div><div class="btn" style="left:1263px;top:593px;width:92px;height:30px;line-height:28px;">关闭协调</div><div class="a" style="left:700px;top:681px;width:325px;height:24px;background:#fff;border:1px solid;border-color:#808080 #fff #fff #808080;box-shadow:inset 1px 1px 0 #404040,inset -1px -1px 0 #d4d0c8"></div><div class="btn" style="left:1038px;top:678px;width:39px;height:30px;line-height:28px;">发送</div><div class="btn" style="left:1086px;top:678px;width:39px;height:30px;line-height:28px;">清空</div><div class="a" style="left:513px;top:155px;width:278px;height:805px;background:#d4d0c8;border-left:1px solid #d4d0c8;border-top:1px solid #d4d0c8;border-right:1px solid #404040;box-shadow:inset 1px 1px 0 #fff,inset -1px 0 0 #808080"></div><svg width="0" height="0" style="position:absolute"><defs><linearGradient id="mg" x1="1" y1="0" x2="0" y2="1"><stop offset="0" stop-color="#b8f4ff"/><stop offset=".5" stop-color="#3cb8f8"/><stop offset="1" stop-color="#1a78e8"/></linearGradient></defs></svg><svg class="a" style="left:534px;top:174px" width="16" height="16" viewBox="0 0 16 16"><rect x="2.6" y="6" width="3" height="7.5" rx="1" fill="#e6e6ee" stroke="#8c8ca4" stroke-width=".9"/><circle cx="4.6" cy="4.4" r="3.7" fill="#f4f4f8" stroke="#9494ac" stroke-width=".9"/><path d="M2.8 3.2 Q4.6 5.6 6.4 3.4" stroke="#74748a" fill="none" stroke-width=".9"/><path d="M6.8 3.6 L14.6 1.8 L14.8 10.2 L7 11.2 Z" fill="url(#mg)" stroke="#5a64b4" stroke-width=".9"/><ellipse cx="10.6" cy="13.6" rx="4.6" ry="2" fill="#efecf8" stroke="#8884b4" stroke-width=".9"/></svg><div class="a ss2" style="left:555px;top:174px"><i class="h">[</i><i class="h">&nbsp;</i><b class="c">初级场</b><i class="h">:</i><i class="h">0</i><i class="h">&nbsp;</i><i class="h">]</i><i class="h">&nbsp;</i><i class="h d">&nbsp;</i><i class="h d">&nbsp;</i><i class="h">&nbsp;</i><i class="h">[</i><i class="h">&nbsp;</i><b class="c">运行</b><i class="h">&nbsp;</i><i class="h">]</i></div><svg class="a" style="left:534px;top:201px" width="16" height="16" viewBox="0 0 16 16"><rect x="2.6" y="6" width="3" height="7.5" rx="1" fill="#e6e6ee" stroke="#8c8ca4" stroke-width=".9"/><circle cx="4.6" cy="4.4" r="3.7" fill="#f4f4f8" stroke="#9494ac" stroke-width=".9"/><path d="M2.8 3.2 Q4.6 5.6 6.4 3.4" stroke="#74748a" fill="none" stroke-width=".9"/><path d="M6.8 3.6 L14.6 1.8 L14.8 10.2 L7 11.2 Z" fill="url(#mg)" stroke="#5a64b4" stroke-width=".9"/><ellipse cx="10.6" cy="13.6" rx="4.6" ry="2" fill="#efecf8" stroke="#8884b4" stroke-width=".9"/></svg><div class="a ss2" style="left:555px;top:201px"><i class="h">[</i><i class="h">&nbsp;</i><b class="c">中级场</b><i class="h">:</i><i class="h">0</i><i class="h">&nbsp;</i><i class="h">]</i><i class="h">&nbsp;</i><i class="h d">&nbsp;</i><i class="h d">&nbsp;</i><i class="h">&nbsp;</i><i class="h">[</i><i class="h">&nbsp;</i><b class="c">运行</b><i class="h">&nbsp;</i><i class="h">]</i></div><svg class="a" style="left:534px;top:228px" width="16" height="16" viewBox="0 0 16 16"><rect x="2.6" y="6" width="3" height="7.5" rx="1" fill="#e6e6ee" stroke="#8c8ca4" stroke-width=".9"/><circle cx="4.6" cy="4.4" r="3.7" fill="#f4f4f8" stroke="#9494ac" stroke-width=".9"/><path d="M2.8 3.2 Q4.6 5.6 6.4 3.4" stroke="#74748a" fill="none" stroke-width=".9"/><path d="M6.8 3.6 L14.6 1.8 L14.8 10.2 L7 11.2 Z" fill="url(#mg)" stroke="#5a64b4" stroke-width=".9"/><ellipse cx="10.6" cy="13.6" rx="4.6" ry="2" fill="#efecf8" stroke="#8884b4" stroke-width=".9"/></svg><div class="a ss2" style="left:555px;top:228px"><i class="h">[</i><i class="h">&nbsp;</i><b class="c">高级场</b><i class="h">:</i><i class="h">0</i><i class="h">&nbsp;</i><i class="h">]</i><i class="h">&nbsp;</i><i class="h d">&nbsp;</i><i class="h d">&nbsp;</i><i class="h">&nbsp;</i><i class="h">[</i><i class="h">&nbsp;</i><b class="c">运行</b><i class="h">&nbsp;</i><i class="h">]</i></div><svg class="a" style="left:534px;top:255px" width="16" height="16" viewBox="0 0 16 16"><rect x="2.6" y="6" width="3" height="7.5" rx="1" fill="#e6e6ee" stroke="#8c8ca4" stroke-width=".9"/><circle cx="4.6" cy="4.4" r="3.7" fill="#f4f4f8" stroke="#9494ac" stroke-width=".9"/><path d="M2.8 3.2 Q4.6 5.6 6.4 3.4" stroke="#74748a" fill="none" stroke-width=".9"/><path d="M6.8 3.6 L14.6 1.8 L14.8 10.2 L7 11.2 Z" fill="url(#mg)" stroke="#5a64b4" stroke-width=".9"/><ellipse cx="10.6" cy="13.6" rx="4.6" ry="2" fill="#efecf8" stroke="#8884b4" stroke-width=".9"/></svg><div class="a ss2" style="left:555px;top:255px"><i class="h">[</i><i class="h">&nbsp;</i><b class="c">经典场</b><i class="h">0</i><i class="h">1</i><i class="h">:</i><i class="h">0</i><i class="h">&nbsp;</i><i class="h">]</i><i class="h">&nbsp;</i><i class="h d">&nbsp;</i><i class="h d">&nbsp;</i><i class="h">&nbsp;</i><i class="h">[</i><i class="h">&nbsp;</i><b class="c">运行</b><i class="h">&nbsp;</i><i class="h">]</i></div><svg class="a" style="left:534px;top:282px" width="16" height="16" viewBox="0 0 16 16"><rect x="2.6" y="6" width="3" height="7.5" rx="1" fill="#e6e6ee" stroke="#8c8ca4" stroke-width=".9"/><circle cx="4.6" cy="4.4" r="3.7" fill="#f4f4f8" stroke="#9494ac" stroke-width=".9"/><path d="M2.8 3.2 Q4.6 5.6 6.4 3.4" stroke="#74748a" fill="none" stroke-width=".9"/><path d="M6.8 3.6 L14.6 1.8 L14.8 10.2 L7 11.2 Z" fill="url(#mg)" stroke="#5a64b4" stroke-width=".9"/><ellipse cx="10.6" cy="13.6" rx="4.6" ry="2" fill="#efecf8" stroke="#8884b4" stroke-width=".9"/></svg><div class="a ss2" style="left:555px;top:282px"><i class="h">[</i><i class="h">&nbsp;</i><b class="c">经典场</b><i class="h">0</i><i class="h">2</i><i class="h">:</i><i class="h">0</i><i class="h">&nbsp;</i><i class="h">]</i><i class="h">&nbsp;</i><i class="h d">&nbsp;</i><i class="h d">&nbsp;</i><i class="h">&nbsp;</i><i class="h">[</i><i class="h">&nbsp;</i><b class="c">运行</b><i class="h">&nbsp;</i><i class="h">]</i></div><svg class="a" style="left:534px;top:309px" width="16" height="16" viewBox="0 0 16 16"><rect x="2.6" y="6" width="3" height="7.5" rx="1" fill="#e6e6ee" stroke="#8c8ca4" stroke-width=".9"/><circle cx="4.6" cy="4.4" r="3.7" fill="#f4f4f8" stroke="#9494ac" stroke-width=".9"/><path d="M2.8 3.2 Q4.6 5.6 6.4 3.4" stroke="#74748a" fill="none" stroke-width=".9"/><path d="M6.8 3.6 L14.6 1.8 L14.8 10.2 L7 11.2 Z" fill="url(#mg)" stroke="#5a64b4" stroke-width=".9"/><ellipse cx="10.6" cy="13.6" rx="4.6" ry="2" fill="#efecf8" stroke="#8884b4" stroke-width=".9"/></svg><div class="a ss2" style="left:555px;top:309px"><i class="h">[</i><i class="h">&nbsp;</i><b class="c">经典场</b><i class="h">0</i><i class="h">3</i><i class="h">:</i><i class="h">0</i><i class="h">&nbsp;</i><i class="h">]</i><i class="h">&nbsp;</i><i class="h d">&nbsp;</i><i class="h d">&nbsp;</i><i class="h">&nbsp;</i><i class="h">[</i><i class="h">&nbsp;</i><b class="c">运行</b><i class="h">&nbsp;</i><i class="h">]</i></div><svg class="a" style="left:534px;top:336px" width="16" height="16" viewBox="0 0 16 16"><rect x="2.6" y="6" width="3" height="7.5" rx="1" fill="#e6e6ee" stroke="#8c8ca4" stroke-width=".9"/><circle cx="4.6" cy="4.4" r="3.7" fill="#f4f4f8" stroke="#9494ac" stroke-width=".9"/><path d="M2.8 3.2 Q4.6 5.6 6.4 3.4" stroke="#74748a" fill="none" stroke-width=".9"/><path d="M6.8 3.6 L14.6 1.8 L14.8 10.2 L7 11.2 Z" fill="url(#mg)" stroke="#5a64b4" stroke-width=".9"/><ellipse cx="10.6" cy="13.6" rx="4.6" ry="2" fill="#efecf8" stroke="#8884b4" stroke-width=".9"/></svg><div class="a ss2" style="left:555px;top:336px"><i class="h">[</i><i class="h">&nbsp;</i><b class="c">经典场</b><i class="h">0</i><i class="h">4</i><i class="h">:</i><i class="h">0</i><i class="h">&nbsp;</i><i class="h">]</i><i class="h">&nbsp;</i><i class="h d">&nbsp;</i><i class="h d">&nbsp;</i><i class="h">&nbsp;</i><i class="h">[</i><i class="h">&nbsp;</i><b class="c">运行</b><i class="h">&nbsp;</i><i class="h">]</i></div><svg class="a" style="left:534px;top:363px" width="16" height="16" viewBox="0 0 16 16"><rect x="2.6" y="6" width="3" height="7.5" rx="1" fill="#e6e6ee" stroke="#8c8ca4" stroke-width=".9"/><circle cx="4.6" cy="4.4" r="3.7" fill="#f4f4f8" stroke="#9494ac" stroke-width=".9"/><path d="M2.8 3.2 Q4.6 5.6 6.4 3.4" stroke="#74748a" fill="none" stroke-width=".9"/><path d="M6.8 3.6 L14.6 1.8 L14.8 10.2 L7 11.2 Z" fill="url(#mg)" stroke="#5a64b4" stroke-width=".9"/><ellipse cx="10.6" cy="13.6" rx="4.6" ry="2" fill="#efecf8" stroke="#8884b4" stroke-width=".9"/></svg><div class="a ss2" style="left:555px;top:363px"><i class="h">[</i><i class="h">&nbsp;</i><b class="c">经典场</b><i class="h">0</i><i class="h">5</i><i class="h">:</i><i class="h">0</i><i class="h">&nbsp;</i><i class="h">]</i><i class="h">&nbsp;</i><i class="h d">&nbsp;</i><i class="h d">&nbsp;</i><i class="h">&nbsp;</i><i class="h">[</i><i class="h">&nbsp;</i><b class="c">运行</b><i class="h">&nbsp;</i><i class="h">]</i></div><svg class="a" style="left:534px;top:390px" width="16" height="16" viewBox="0 0 16 16"><rect x="2.6" y="6" width="3" height="7.5" rx="1" fill="#e6e6ee" stroke="#8c8ca4" stroke-width=".9"/><circle cx="4.6" cy="4.4" r="3.7" fill="#f4f4f8" stroke="#9494ac" stroke-width=".9"/><path d="M2.8 3.2 Q4.6 5.6 6.4 3.4" stroke="#74748a" fill="none" stroke-width=".9"/><path d="M6.8 3.6 L14.6 1.8 L14.8 10.2 L7 11.2 Z" fill="url(#mg)" stroke="#5a64b4" stroke-width=".9"/><ellipse cx="10.6" cy="13.6" rx="4.6" ry="2" fill="#efecf8" stroke="#8884b4" stroke-width=".9"/></svg><div class="a ss2" style="left:555px;top:390px"><i class="h">[</i><i class="h">&nbsp;</i><b class="c">经典场</b><i class="h">0</i><i class="h">6</i><i class="h">:</i><i class="h">0</i><i class="h">&nbsp;</i><i class="h">]</i><i class="h">&nbsp;</i><i class="h d">&nbsp;</i><i class="h d">&nbsp;</i><i class="h">&nbsp;</i><i class="h">[</i><i class="h">&nbsp;</i><b class="c">运行</b><i class="h">&nbsp;</i><i class="h">]</i></div><svg class="a" style="left:534px;top:417px" width="16" height="16" viewBox="0 0 16 16"><rect x="2.6" y="6" width="3" height="7.5" rx="1" fill="#e6e6ee" stroke="#8c8ca4" stroke-width=".9"/><circle cx="4.6" cy="4.4" r="3.7" fill="#f4f4f8" stroke="#9494ac" stroke-width=".9"/><path d="M2.8 3.2 Q4.6 5.6 6.4 3.4" stroke="#74748a" fill="none" stroke-width=".9"/><path d="M6.8 3.6 L14.6 1.8 L14.8 10.2 L7 11.2 Z" fill="url(#mg)" stroke="#5a64b4" stroke-width=".9"/><ellipse cx="10.6" cy="13.6" rx="4.6" ry="2" fill="#efecf8" stroke="#8884b4" stroke-width=".9"/></svg><div class="a ss2" style="left:555px;top:417px"><i class="h">[</i><i class="h">&nbsp;</i><b class="c">红黑大战</b><i class="h d">&nbsp;</i><i class="h">G</i><i class="h">1</i><i class="h">:</i><i class="h">0</i><i class="h">&nbsp;</i><i class="h">]</i><i class="h">&nbsp;</i><i class="h d">&nbsp;</i><i class="h d">&nbsp;</i><i class="h">&nbsp;</i><i class="h">[</i><i class="h">&nbsp;</i><b class="c">运行</b><i class="h">&nbsp;</i><i class="h">]</i></div><svg class="a" style="left:534px;top:444px" width="16" height="16" viewBox="0 0 16 16"><rect x="2.6" y="6" width="3" height="7.5" rx="1" fill="#e6e6ee" stroke="#8c8ca4" stroke-width=".9"/><circle cx="4.6" cy="4.4" r="3.7" fill="#f4f4f8" stroke="#9494ac" stroke-width=".9"/><path d="M2.8 3.2 Q4.6 5.6 6.4 3.4" stroke="#74748a" fill="none" stroke-width=".9"/><path d="M6.8 3.6 L14.6 1.8 L14.8 10.2 L7 11.2 Z" fill="url(#mg)" stroke="#5a64b4" stroke-width=".9"/><ellipse cx="10.6" cy="13.6" rx="4.6" ry="2" fill="#efecf8" stroke="#8884b4" stroke-width=".9"/></svg><div class="a ss2" style="left:555px;top:444px"><i class="h">[</i><i class="h">&nbsp;</i><b class="c">百人推筒子</b><i class="h d">&nbsp;</i><i class="h">G</i><i class="h">1</i><i class="h">:</i><i class="h">0</i><i class="h">&nbsp;</i><i class="h">]</i><i class="h">&nbsp;</i><i class="h d">&nbsp;</i><i class="h d">&nbsp;</i><i class="h">&nbsp;</i><i class="h">[</i><i class="h">&nbsp;</i><b class="c">运行</b><i class="h">&nbsp;</i><i class="h">]</i></div><svg class="a" style="left:534px;top:471px" width="16" height="16" viewBox="0 0 16 16"><rect x="2.6" y="6" width="3" height="7.5" rx="1" fill="#e6e6ee" stroke="#8c8ca4" stroke-width=".9"/><circle cx="4.6" cy="4.4" r="3.7" fill="#f4f4f8" stroke="#9494ac" stroke-width=".9"/><path d="M2.8 3.2 Q4.6 5.6 6.4 3.4" stroke="#74748a" fill="none" stroke-width=".9"/><path d="M6.8 3.6 L14.6 1.8 L14.8 10.2 L7 11.2 Z" fill="url(#mg)" stroke="#5a64b4" stroke-width=".9"/><ellipse cx="10.6" cy="13.6" rx="4.6" ry="2" fill="#efecf8" stroke="#8884b4" stroke-width=".9"/></svg><div class="a ss2" style="left:555px;top:471px"><i class="h">[</i><i class="h">&nbsp;</i><b class="c">骰宝</b><i class="h d">&nbsp;</i><i class="h">G</i><i class="h">1</i><i class="h">:</i><i class="h">0</i><i class="h">&nbsp;</i><i class="h">]</i><i class="h">&nbsp;</i><i class="h d">&nbsp;</i><i class="h d">&nbsp;</i><i class="h">&nbsp;</i><i class="h">[</i><i class="h">&nbsp;</i><b class="c">运行</b><i class="h">&nbsp;</i><i class="h">]</i></div><svg class="a" style="left:534px;top:498px" width="16" height="16" viewBox="0 0 16 16"><rect x="2.6" y="6" width="3" height="7.5" rx="1" fill="#e6e6ee" stroke="#8c8ca4" stroke-width=".9"/><circle cx="4.6" cy="4.4" r="3.7" fill="#f4f4f8" stroke="#9494ac" stroke-width=".9"/><path d="M2.8 3.2 Q4.6 5.6 6.4 3.4" stroke="#74748a" fill="none" stroke-width=".9"/><path d="M6.8 3.6 L14.6 1.8 L14.8 10.2 L7 11.2 Z" fill="url(#mg)" stroke="#5a64b4" stroke-width=".9"/><ellipse cx="10.6" cy="13.6" rx="4.6" ry="2" fill="#efecf8" stroke="#8884b4" stroke-width=".9"/></svg><div class="a ss2" style="left:555px;top:498px"><i class="h">[</i><i class="h">&nbsp;</i><b class="c">最高返奖</b><i class="h">5</i><b class="c">倍</b><i class="h">:</i><i class="h">0</i><i class="h">&nbsp;</i><i class="h">]</i><i class="h">&nbsp;</i><i class="h d">&nbsp;</i><i class="h d">&nbsp;</i><i class="h">&nbsp;</i><i class="h">[</i><i class="h">&nbsp;</i><b class="c">运行</b><i class="h">&nbsp;</i><i class="h">]</i></div><svg class="a" style="left:534px;top:525px" width="16" height="16" viewBox="0 0 16 16"><rect x="2.6" y="6" width="3" height="7.5" rx="1" fill="#e6e6ee" stroke="#8c8ca4" stroke-width=".9"/><circle cx="4.6" cy="4.4" r="3.7" fill="#f4f4f8" stroke="#9494ac" stroke-width=".9"/><path d="M2.8 3.2 Q4.6 5.6 6.4 3.4" stroke="#74748a" fill="none" stroke-width=".9"/><path d="M6.8 3.6 L14.6 1.8 L14.8 10.2 L7 11.2 Z" fill="url(#mg)" stroke="#5a64b4" stroke-width=".9"/><ellipse cx="10.6" cy="13.6" rx="4.6" ry="2" fill="#efecf8" stroke="#8884b4" stroke-width=".9"/></svg><div class="a ss2" style="left:555px;top:525px"><i class="h">[</i><i class="h">&nbsp;</i><b class="c">最高返奖</b><i class="h">1</i><i class="h">0</i><b class="c">倍</b><i class="h">:</i><i class="h">0</i><i class="h">&nbsp;</i><i class="h">]</i><i class="h">&nbsp;</i><i class="h d">&nbsp;</i><i class="h d">&nbsp;</i><i class="h">&nbsp;</i><i class="h">[</i><i class="h">&nbsp;</i><b class="c">运行</b><i class="h">&nbsp;</i><i class="h">]</i></div><svg class="a" style="left:534px;top:552px" width="16" height="16" viewBox="0 0 16 16"><rect x="2.6" y="6" width="3" height="7.5" rx="1" fill="#e6e6ee" stroke="#8c8ca4" stroke-width=".9"/><circle cx="4.6" cy="4.4" r="3.7" fill="#f4f4f8" stroke="#9494ac" stroke-width=".9"/><path d="M2.8 3.2 Q4.6 5.6 6.4 3.4" stroke="#74748a" fill="none" stroke-width=".9"/><path d="M6.8 3.6 L14.6 1.8 L14.8 10.2 L7 11.2 Z" fill="url(#mg)" stroke="#5a64b4" stroke-width=".9"/><ellipse cx="10.6" cy="13.6" rx="4.6" ry="2" fill="#efecf8" stroke="#8884b4" stroke-width=".9"/></svg><div class="a ss2" style="left:555px;top:552px"><i class="h">[</i><i class="h">&nbsp;</i><b class="c">龙虎斗</b><i class="h d">&nbsp;</i><i class="h">G</i><i class="h">1</i><i class="h">:</i><i class="h">0</i><i class="h">&nbsp;</i><i class="h">]</i><i class="h">&nbsp;</i><i class="h d">&nbsp;</i><i class="h d">&nbsp;</i><i class="h">&nbsp;</i><i class="h">[</i><i class="h">&nbsp;</i><b class="c">运行</b><i class="h">&nbsp;</i><i class="h">]</i></div><svg class="a" style="left:534px;top:579px" width="16" height="16" viewBox="0 0 16 16"><rect x="2.6" y="6" width="3" height="7.5" rx="1" fill="#e6e6ee" stroke="#8c8ca4" stroke-width=".9"/><circle cx="4.6" cy="4.4" r="3.7" fill="#f4f4f8" stroke="#9494ac" stroke-width=".9"/><path d="M2.8 3.2 Q4.6 5.6 6.4 3.4" stroke="#74748a" fill="none" stroke-width=".9"/><path d="M6.8 3.6 L14.6 1.8 L14.8 10.2 L7 11.2 Z" fill="url(#mg)" stroke="#5a64b4" stroke-width=".9"/><ellipse cx="10.6" cy="13.6" rx="4.6" ry="2" fill="#efecf8" stroke="#8884b4" stroke-width=".9"/></svg><div class="a ss2" style="left:555px;top:579px"><i class="h">[</i><i class="h">&nbsp;</i><b class="c">初级场</b><i class="h">:</i><i class="h">0</i><i class="h">&nbsp;</i><i class="h">]</i><i class="h">&nbsp;</i><i class="h d">&nbsp;</i><i class="h d">&nbsp;</i><i class="h">&nbsp;</i><i class="h">[</i><i class="h">&nbsp;</i><b class="c">运行</b><i class="h">&nbsp;</i><i class="h">]</i></div><svg class="a" style="left:534px;top:606px" width="16" height="16" viewBox="0 0 16 16"><rect x="2.6" y="6" width="3" height="7.5" rx="1" fill="#e6e6ee" stroke="#8c8ca4" stroke-width=".9"/><circle cx="4.6" cy="4.4" r="3.7" fill="#f4f4f8" stroke="#9494ac" stroke-width=".9"/><path d="M2.8 3.2 Q4.6 5.6 6.4 3.4" stroke="#74748a" fill="none" stroke-width=".9"/><path d="M6.8 3.6 L14.6 1.8 L14.8 10.2 L7 11.2 Z" fill="url(#mg)" stroke="#5a64b4" stroke-width=".9"/><ellipse cx="10.6" cy="13.6" rx="4.6" ry="2" fill="#efecf8" stroke="#8884b4" stroke-width=".9"/></svg><div class="a ss2" style="left:555px;top:606px"><i class="h">[</i><i class="h">&nbsp;</i><b class="c">中级场</b><i class="h">:</i><i class="h">0</i><i class="h">&nbsp;</i><i class="h">]</i><i class="h">&nbsp;</i><i class="h d">&nbsp;</i><i class="h d">&nbsp;</i><i class="h">&nbsp;</i><i class="h">[</i><i class="h">&nbsp;</i><b class="c">运行</b><i class="h">&nbsp;</i><i class="h">]</i></div><svg class="a" style="left:534px;top:633px" width="16" height="16" viewBox="0 0 16 16"><rect x="2.6" y="6" width="3" height="7.5" rx="1" fill="#e6e6ee" stroke="#8c8ca4" stroke-width=".9"/><circle cx="4.6" cy="4.4" r="3.7" fill="#f4f4f8" stroke="#9494ac" stroke-width=".9"/><path d="M2.8 3.2 Q4.6 5.6 6.4 3.4" stroke="#74748a" fill="none" stroke-width=".9"/><path d="M6.8 3.6 L14.6 1.8 L14.8 10.2 L7 11.2 Z" fill="url(#mg)" stroke="#5a64b4" stroke-width=".9"/><ellipse cx="10.6" cy="13.6" rx="4.6" ry="2" fill="#efecf8" stroke="#8884b4" stroke-width=".9"/></svg><div class="a ss2" style="left:555px;top:633px"><i class="h">[</i><i class="h">&nbsp;</i><b class="c">高级场</b><i class="h">:</i><i class="h">0</i><i class="h">&nbsp;</i><i class="h">]</i><i class="h">&nbsp;</i><i class="h d">&nbsp;</i><i class="h d">&nbsp;</i><i class="h">&nbsp;</i><i class="h">[</i><i class="h">&nbsp;</i><b class="c">运行</b><i class="h">&nbsp;</i><i class="h">]</i></div><svg class="a" style="left:534px;top:660px" width="16" height="16" viewBox="0 0 16 16"><rect x="2.6" y="6" width="3" height="7.5" rx="1" fill="#e6e6ee" stroke="#8c8ca4" stroke-width=".9"/><circle cx="4.6" cy="4.4" r="3.7" fill="#f4f4f8" stroke="#9494ac" stroke-width=".9"/><path d="M2.8 3.2 Q4.6 5.6 6.4 3.4" stroke="#74748a" fill="none" stroke-width=".9"/><path d="M6.8 3.6 L14.6 1.8 L14.8 10.2 L7 11.2 Z" fill="url(#mg)" stroke="#5a64b4" stroke-width=".9"/><ellipse cx="10.6" cy="13.6" rx="4.6" ry="2" fill="#efecf8" stroke="#8884b4" stroke-width=".9"/></svg><div class="a ss2" style="left:555px;top:660px"><i class="h">[</i><i class="h">&nbsp;</i><b class="c">至尊场</b><i class="h">:</i><i class="h">0</i><i class="h">&nbsp;</i><i class="h">]</i><i class="h">&nbsp;</i><i class="h d">&nbsp;</i><i class="h d">&nbsp;</i><i class="h">&nbsp;</i><i class="h">[</i><i class="h">&nbsp;</i><b class="c">运行</b><i class="h">&nbsp;</i><i class="h">]</i></div><svg class="a" style="left:534px;top:687px" width="16" height="16" viewBox="0 0 16 16"><rect x="2.6" y="6" width="3" height="7.5" rx="1" fill="#e6e6ee" stroke="#8c8ca4" stroke-width=".9"/><circle cx="4.6" cy="4.4" r="3.7" fill="#f4f4f8" stroke="#9494ac" stroke-width=".9"/><path d="M2.8 3.2 Q4.6 5.6 6.4 3.4" stroke="#74748a" fill="none" stroke-width=".9"/><path d="M6.8 3.6 L14.6 1.8 L14.8 10.2 L7 11.2 Z" fill="url(#mg)" stroke="#5a64b4" stroke-width=".9"/><ellipse cx="10.6" cy="13.6" rx="4.6" ry="2" fill="#efecf8" stroke="#8884b4" stroke-width=".9"/></svg><div class="a ss2" style="left:555px;top:687px"><i class="h">[</i><i class="h">&nbsp;</i><b class="c">初级场</b><i class="h">:</i><i class="h">0</i><i class="h">&nbsp;</i><i class="h">]</i><i class="h">&nbsp;</i><i class="h d">&nbsp;</i><i class="h d">&nbsp;</i><i class="h">&nbsp;</i><i class="h">[</i><i class="h">&nbsp;</i><b class="c">运行</b><i class="h">&nbsp;</i><i class="h">]</i></div><svg class="a" style="left:534px;top:714px" width="16" height="16" viewBox="0 0 16 16"><rect x="2.6" y="6" width="3" height="7.5" rx="1" fill="#e6e6ee" stroke="#8c8ca4" stroke-width=".9"/><circle cx="4.6" cy="4.4" r="3.7" fill="#f4f4f8" stroke="#9494ac" stroke-width=".9"/><path d="M2.8 3.2 Q4.6 5.6 6.4 3.4" stroke="#74748a" fill="none" stroke-width=".9"/><path d="M6.8 3.6 L14.6 1.8 L14.8 10.2 L7 11.2 Z" fill="url(#mg)" stroke="#5a64b4" stroke-width=".9"/><ellipse cx="10.6" cy="13.6" rx="4.6" ry="2" fill="#efecf8" stroke="#8884b4" stroke-width=".9"/></svg><div class="a ss2" style="left:555px;top:714px"><i class="h">[</i><i class="h">&nbsp;</i><b class="c">中级场</b><i class="h">:</i><i class="h">0</i><i class="h">&nbsp;</i><i class="h">]</i><i class="h">&nbsp;</i><i class="h d">&nbsp;</i><i class="h d">&nbsp;</i><i class="h">&nbsp;</i><i class="h">[</i><i class="h">&nbsp;</i><b class="c">运行</b><i class="h">&nbsp;</i><i class="h">]</i></div><svg class="a" style="left:534px;top:741px" width="16" height="16" viewBox="0 0 16 16"><rect x="2.6" y="6" width="3" height="7.5" rx="1" fill="#e6e6ee" stroke="#8c8ca4" stroke-width=".9"/><circle cx="4.6" cy="4.4" r="3.7" fill="#f4f4f8" stroke="#9494ac" stroke-width=".9"/><path d="M2.8 3.2 Q4.6 5.6 6.4 3.4" stroke="#74748a" fill="none" stroke-width=".9"/><path d="M6.8 3.6 L14.6 1.8 L14.8 10.2 L7 11.2 Z" fill="url(#mg)" stroke="#5a64b4" stroke-width=".9"/><ellipse cx="10.6" cy="13.6" rx="4.6" ry="2" fill="#efecf8" stroke="#8884b4" stroke-width=".9"/></svg><div class="a ss2" style="left:555px;top:741px"><i class="h">[</i><i class="h">&nbsp;</i><b class="c">高级场</b><i class="h">:</i><i class="h">0</i><i class="h">&nbsp;</i><i class="h">]</i><i class="h">&nbsp;</i><i class="h d">&nbsp;</i><i class="h d">&nbsp;</i><i class="h">&nbsp;</i><i class="h">[</i><i class="h">&nbsp;</i><b class="c">运行</b><i class="h">&nbsp;</i><i class="h">]</i></div><svg class="a" style="left:534px;top:768px" width="16" height="16" viewBox="0 0 16 16"><rect x="2.6" y="6" width="3" height="7.5" rx="1" fill="#e6e6ee" stroke="#8c8ca4" stroke-width=".9"/><circle cx="4.6" cy="4.4" r="3.7" fill="#f4f4f8" stroke="#9494ac" stroke-width=".9"/><path d="M2.8 3.2 Q4.6 5.6 6.4 3.4" stroke="#74748a" fill="none" stroke-width=".9"/><path d="M6.8 3.6 L14.6 1.8 L14.8 10.2 L7 11.2 Z" fill="url(#mg)" stroke="#5a64b4" stroke-width=".9"/><ellipse cx="10.6" cy="13.6" rx="4.6" ry="2" fill="#efecf8" stroke="#8884b4" stroke-width=".9"/></svg><div class="a ss2" style="left:555px;top:768px"><i class="h">[</i><i class="h">&nbsp;</i><b class="c">至尊场</b><i class="h">:</i><i class="h">0</i><i class="h">&nbsp;</i><i class="h">]</i><i class="h">&nbsp;</i><i class="h d">&nbsp;</i><i class="h d">&nbsp;</i><i class="h">&nbsp;</i><i class="h">[</i><i class="h">&nbsp;</i><b class="c">运行</b><i class="h">&nbsp;</i><i class="h">]</i></div><svg class="a" style="left:534px;top:795px" width="16" height="16" viewBox="0 0 16 16"><rect x="2.6" y="6" width="3" height="7.5" rx="1" fill="#e6e6ee" stroke="#8c8ca4" stroke-width=".9"/><circle cx="4.6" cy="4.4" r="3.7" fill="#f4f4f8" stroke="#9494ac" stroke-width=".9"/><path d="M2.8 3.2 Q4.6 5.6 6.4 3.4" stroke="#74748a" fill="none" stroke-width=".9"/><path d="M6.8 3.6 L14.6 1.8 L14.8 10.2 L7 11.2 Z" fill="url(#mg)" stroke="#5a64b4" stroke-width=".9"/><ellipse cx="10.6" cy="13.6" rx="4.6" ry="2" fill="#efecf8" stroke="#8884b4" stroke-width=".9"/></svg><div class="a ss2" style="left:555px;top:795px"><i class="h">[</i><i class="h">&nbsp;</i><b class="c">初级场</b><i class="h">:</i><i class="h">0</i><i class="h">&nbsp;</i><i class="h">]</i><i class="h">&nbsp;</i><i class="h d">&nbsp;</i><i class="h d">&nbsp;</i><i class="h">&nbsp;</i><i class="h">[</i><i class="h">&nbsp;</i><b class="c">运行</b><i class="h">&nbsp;</i><i class="h">]</i></div><svg class="a" style="left:534px;top:822px" width="16" height="16" viewBox="0 0 16 16"><rect x="2.6" y="6" width="3" height="7.5" rx="1" fill="#e6e6ee" stroke="#8c8ca4" stroke-width=".9"/><circle cx="4.6" cy="4.4" r="3.7" fill="#f4f4f8" stroke="#9494ac" stroke-width=".9"/><path d="M2.8 3.2 Q4.6 5.6 6.4 3.4" stroke="#74748a" fill="none" stroke-width=".9"/><path d="M6.8 3.6 L14.6 1.8 L14.8 10.2 L7 11.2 Z" fill="url(#mg)" stroke="#5a64b4" stroke-width=".9"/><ellipse cx="10.6" cy="13.6" rx="4.6" ry="2" fill="#efecf8" stroke="#8884b4" stroke-width=".9"/></svg><div class="a ss2" style="left:555px;top:822px"><i class="h">[</i><i class="h">&nbsp;</i><b class="c">初级场</b><i class="h">:</i><i class="h">0</i><i class="h">&nbsp;</i><i class="h">]</i><i class="h">&nbsp;</i><i class="h d">&nbsp;</i><i class="h d">&nbsp;</i><i class="h">&nbsp;</i><i class="h">[</i><i class="h">&nbsp;</i><b class="c">运行</b><i class="h">&nbsp;</i><i class="h">]</i></div><svg class="a" style="left:534px;top:849px" width="16" height="16" viewBox="0 0 16 16"><rect x="2.6" y="6" width="3" height="7.5" rx="1" fill="#e6e6ee" stroke="#8c8ca4" stroke-width=".9"/><circle cx="4.6" cy="4.4" r="3.7" fill="#f4f4f8" stroke="#9494ac" stroke-width=".9"/><path d="M2.8 3.2 Q4.6 5.6 6.4 3.4" stroke="#74748a" fill="none" stroke-width=".9"/><path d="M6.8 3.6 L14.6 1.8 L14.8 10.2 L7 11.2 Z" fill="url(#mg)" stroke="#5a64b4" stroke-width=".9"/><ellipse cx="10.6" cy="13.6" rx="4.6" ry="2" fill="#efecf8" stroke="#8884b4" stroke-width=".9"/></svg><div class="a ss2" style="left:555px;top:849px"><i class="h">[</i><i class="h">&nbsp;</i><b class="c">最低单注</b><i class="h">0</i><i class="h">.</i><i class="h">1</i><b class="c">元</b><i class="h">:</i><i class="h">0</i><i class="h">&nbsp;</i><i class="h">]</i><i class="h">&nbsp;</i><i class="h d">&nbsp;</i><i class="h d">&nbsp;</i><i class="h">&nbsp;</i><i class="h">[</i><i class="h">&nbsp;</i><b class="c">运行</b><i class="h">&nbsp;</i><i class="h">]</i></div><svg class="a" style="left:534px;top:876px" width="16" height="16" viewBox="0 0 16 16"><rect x="2.6" y="6" width="3" height="7.5" rx="1" fill="#e6e6ee" stroke="#8c8ca4" stroke-width=".9"/><circle cx="4.6" cy="4.4" r="3.7" fill="#f4f4f8" stroke="#9494ac" stroke-width=".9"/><path d="M2.8 3.2 Q4.6 5.6 6.4 3.4" stroke="#74748a" fill="none" stroke-width=".9"/><path d="M6.8 3.6 L14.6 1.8 L14.8 10.2 L7 11.2 Z" fill="url(#mg)" stroke="#5a64b4" stroke-width=".9"/><ellipse cx="10.6" cy="13.6" rx="4.6" ry="2" fill="#efecf8" stroke="#8884b4" stroke-width=".9"/></svg><div class="a ss2" style="left:555px;top:876px"><i class="h">[</i><i class="h">&nbsp;</i><b class="c">最低单注</b><i class="h">1</i><b class="c">元</b><i class="h">:</i><i class="h">0</i><i class="h">&nbsp;</i><i class="h">]</i><i class="h">&nbsp;</i><i class="h d">&nbsp;</i><i class="h d">&nbsp;</i><i class="h">&nbsp;</i><i class="h">[</i><i class="h">&nbsp;</i><b class="c">运行</b><i class="h">&nbsp;</i><i class="h">]</i></div><svg class="a" style="left:534px;top:903px" width="16" height="16" viewBox="0 0 16 16"><rect x="2.6" y="6" width="3" height="7.5" rx="1" fill="#e6e6ee" stroke="#8c8ca4" stroke-width=".9"/><circle cx="4.6" cy="4.4" r="3.7" fill="#f4f4f8" stroke="#9494ac" stroke-width=".9"/><path d="M2.8 3.2 Q4.6 5.6 6.4 3.4" stroke="#74748a" fill="none" stroke-width=".9"/><path d="M6.8 3.6 L14.6 1.8 L14.8 10.2 L7 11.2 Z" fill="url(#mg)" stroke="#5a64b4" stroke-width=".9"/><ellipse cx="10.6" cy="13.6" rx="4.6" ry="2" fill="#efecf8" stroke="#8884b4" stroke-width=".9"/></svg><div class="a ss2" style="left:555px;top:903px"><i class="h">[</i><i class="h">&nbsp;</i><b class="c">最低单注</b><i class="h">1</i><i class="h">0</i><b class="c">元</b><i class="h">:</i><i class="h">0</i><i class="h">&nbsp;</i><i class="h">]</i><i class="h">&nbsp;</i><i class="h d">&nbsp;</i><i class="h d">&nbsp;</i><i class="h">&nbsp;</i><i class="h">[</i><i class="h">&nbsp;</i><b class="c">运行</b><i class="h">&nbsp;</i><i class="h">]</i></div><svg class="a" style="left:534px;top:930px" width="16" height="16" viewBox="0 0 16 16"><rect x="2.6" y="6" width="3" height="7.5" rx="1" fill="#e6e6ee" stroke="#8c8ca4" stroke-width=".9"/><circle cx="4.6" cy="4.4" r="3.7" fill="#f4f4f8" stroke="#9494ac" stroke-width=".9"/><path d="M2.8 3.2 Q4.6 5.6 6.4 3.4" stroke="#74748a" fill="none" stroke-width=".9"/><path d="M6.8 3.6 L14.6 1.8 L14.8 10.2 L7 11.2 Z" fill="url(#mg)" stroke="#5a64b4" stroke-width=".9"/><ellipse cx="10.6" cy="13.6" rx="4.6" ry="2" fill="#efecf8" stroke="#8884b4" stroke-width=".9"/></svg><div class="a ss2" style="left:555px;top:930px"><i class="h">[</i><i class="h">&nbsp;</i><b class="c">初级场</b><i class="h">:</i><i class="h">0</i><i class="h">&nbsp;</i><i class="h">]</i><i class="h">&nbsp;</i><i class="h d">&nbsp;</i><i class="h d">&nbsp;</i><i class="h">&nbsp;</i><i class="h">[</i><i class="h">&nbsp;</i><b class="c">运行</b><i class="h">&nbsp;</i><i class="h">]</i></div><svg class="a" style="left:534px;top:957px" width="16" height="16" viewBox="0 0 16 16"><rect x="2.6" y="6" width="3" height="7.5" rx="1" fill="#e6e6ee" stroke="#8c8ca4" stroke-width=".9"/><circle cx="4.6" cy="4.4" r="3.7" fill="#f4f4f8" stroke="#9494ac" stroke-width=".9"/><path d="M2.8 3.2 Q4.6 5.6 6.4 3.4" stroke="#74748a" fill="none" stroke-width=".9"/><path d="M6.8 3.6 L14.6 1.8 L14.8 10.2 L7 11.2 Z" fill="url(#mg)" stroke="#5a64b4" stroke-width=".9"/><ellipse cx="10.6" cy="13.6" rx="4.6" ry="2" fill="#efecf8" stroke="#8884b4" stroke-width=".9"/></svg><div class="a ss2" style="left:555px;top:957px"><i class="h">[</i><i class="h">&nbsp;</i><b class="c">初级场</b><i class="h">:</i><i class="h">0</i><i class="h">&nbsp;</i><i class="h">]</i><i class="h">&nbsp;</i><i class="h d">&nbsp;</i><i class="h d">&nbsp;</i><i class="h">&nbsp;</i><i class="h">[</i><i class="h">&nbsp;</i><b class="c">运行</b><i class="h">&nbsp;</i><i class="h">]</i></div><div class="a" style="left:1727px;top:29px;width:16px;height:930px;background:linear-gradient(90deg,#e3e3e3,#f0f0f0);border-left:1px solid #d8d8d8"></div><div class="a" style="left:1732px;top:37px;border-left:4px solid transparent;border-right:4px solid transparent;border-bottom:4px solid #333"></div><div class="a" style="left:1728px;top:48px;width:15px;height:764px;border:1px solid #9c9c9c;border-radius:2px;background:linear-gradient(90deg,#f4f4f4,#e8e8e8 45%,#d4d4d4 55%,#dcdcdc)"></div><div class="a" style="left:1732px;top:427px;width:7px;height:5px;background:repeating-linear-gradient(#666 0 1px,transparent 1px 2px)"></div><div class="a" style="left:1732px;top:948px;border-left:4px solid transparent;border-right:4px solid transparent;border-top:4px solid #333"></div><div class="a" style="left:8px;top:959px;width:1735px;height:16px;background:linear-gradient(#e3e3e3,#f0f0f0);border-top:1px solid #d8d8d8"></div><div class="a" style="left:14px;top:963px;border-top:4px solid transparent;border-bottom:4px solid transparent;border-right:4px solid #333"></div><div class="a" style="left:1717px;top:963px;border-top:4px solid transparent;border-bottom:4px solid transparent;border-left:4px solid #333"></div><div class="a" style="left:26px;top:960px;width:1505px;height:14px;border:1px solid #9c9c9c;border-radius:2px;background:linear-gradient(#f4f4f4,#e8e8e8 45%,#d4d4d4 55%,#dcdcdc)"></div><div class="a" style="left:775px;top:963px;width:5px;height:7px;background:repeating-linear-gradient(90deg,#666 0 1px,transparent 1px 2px)"></div></body></html>
